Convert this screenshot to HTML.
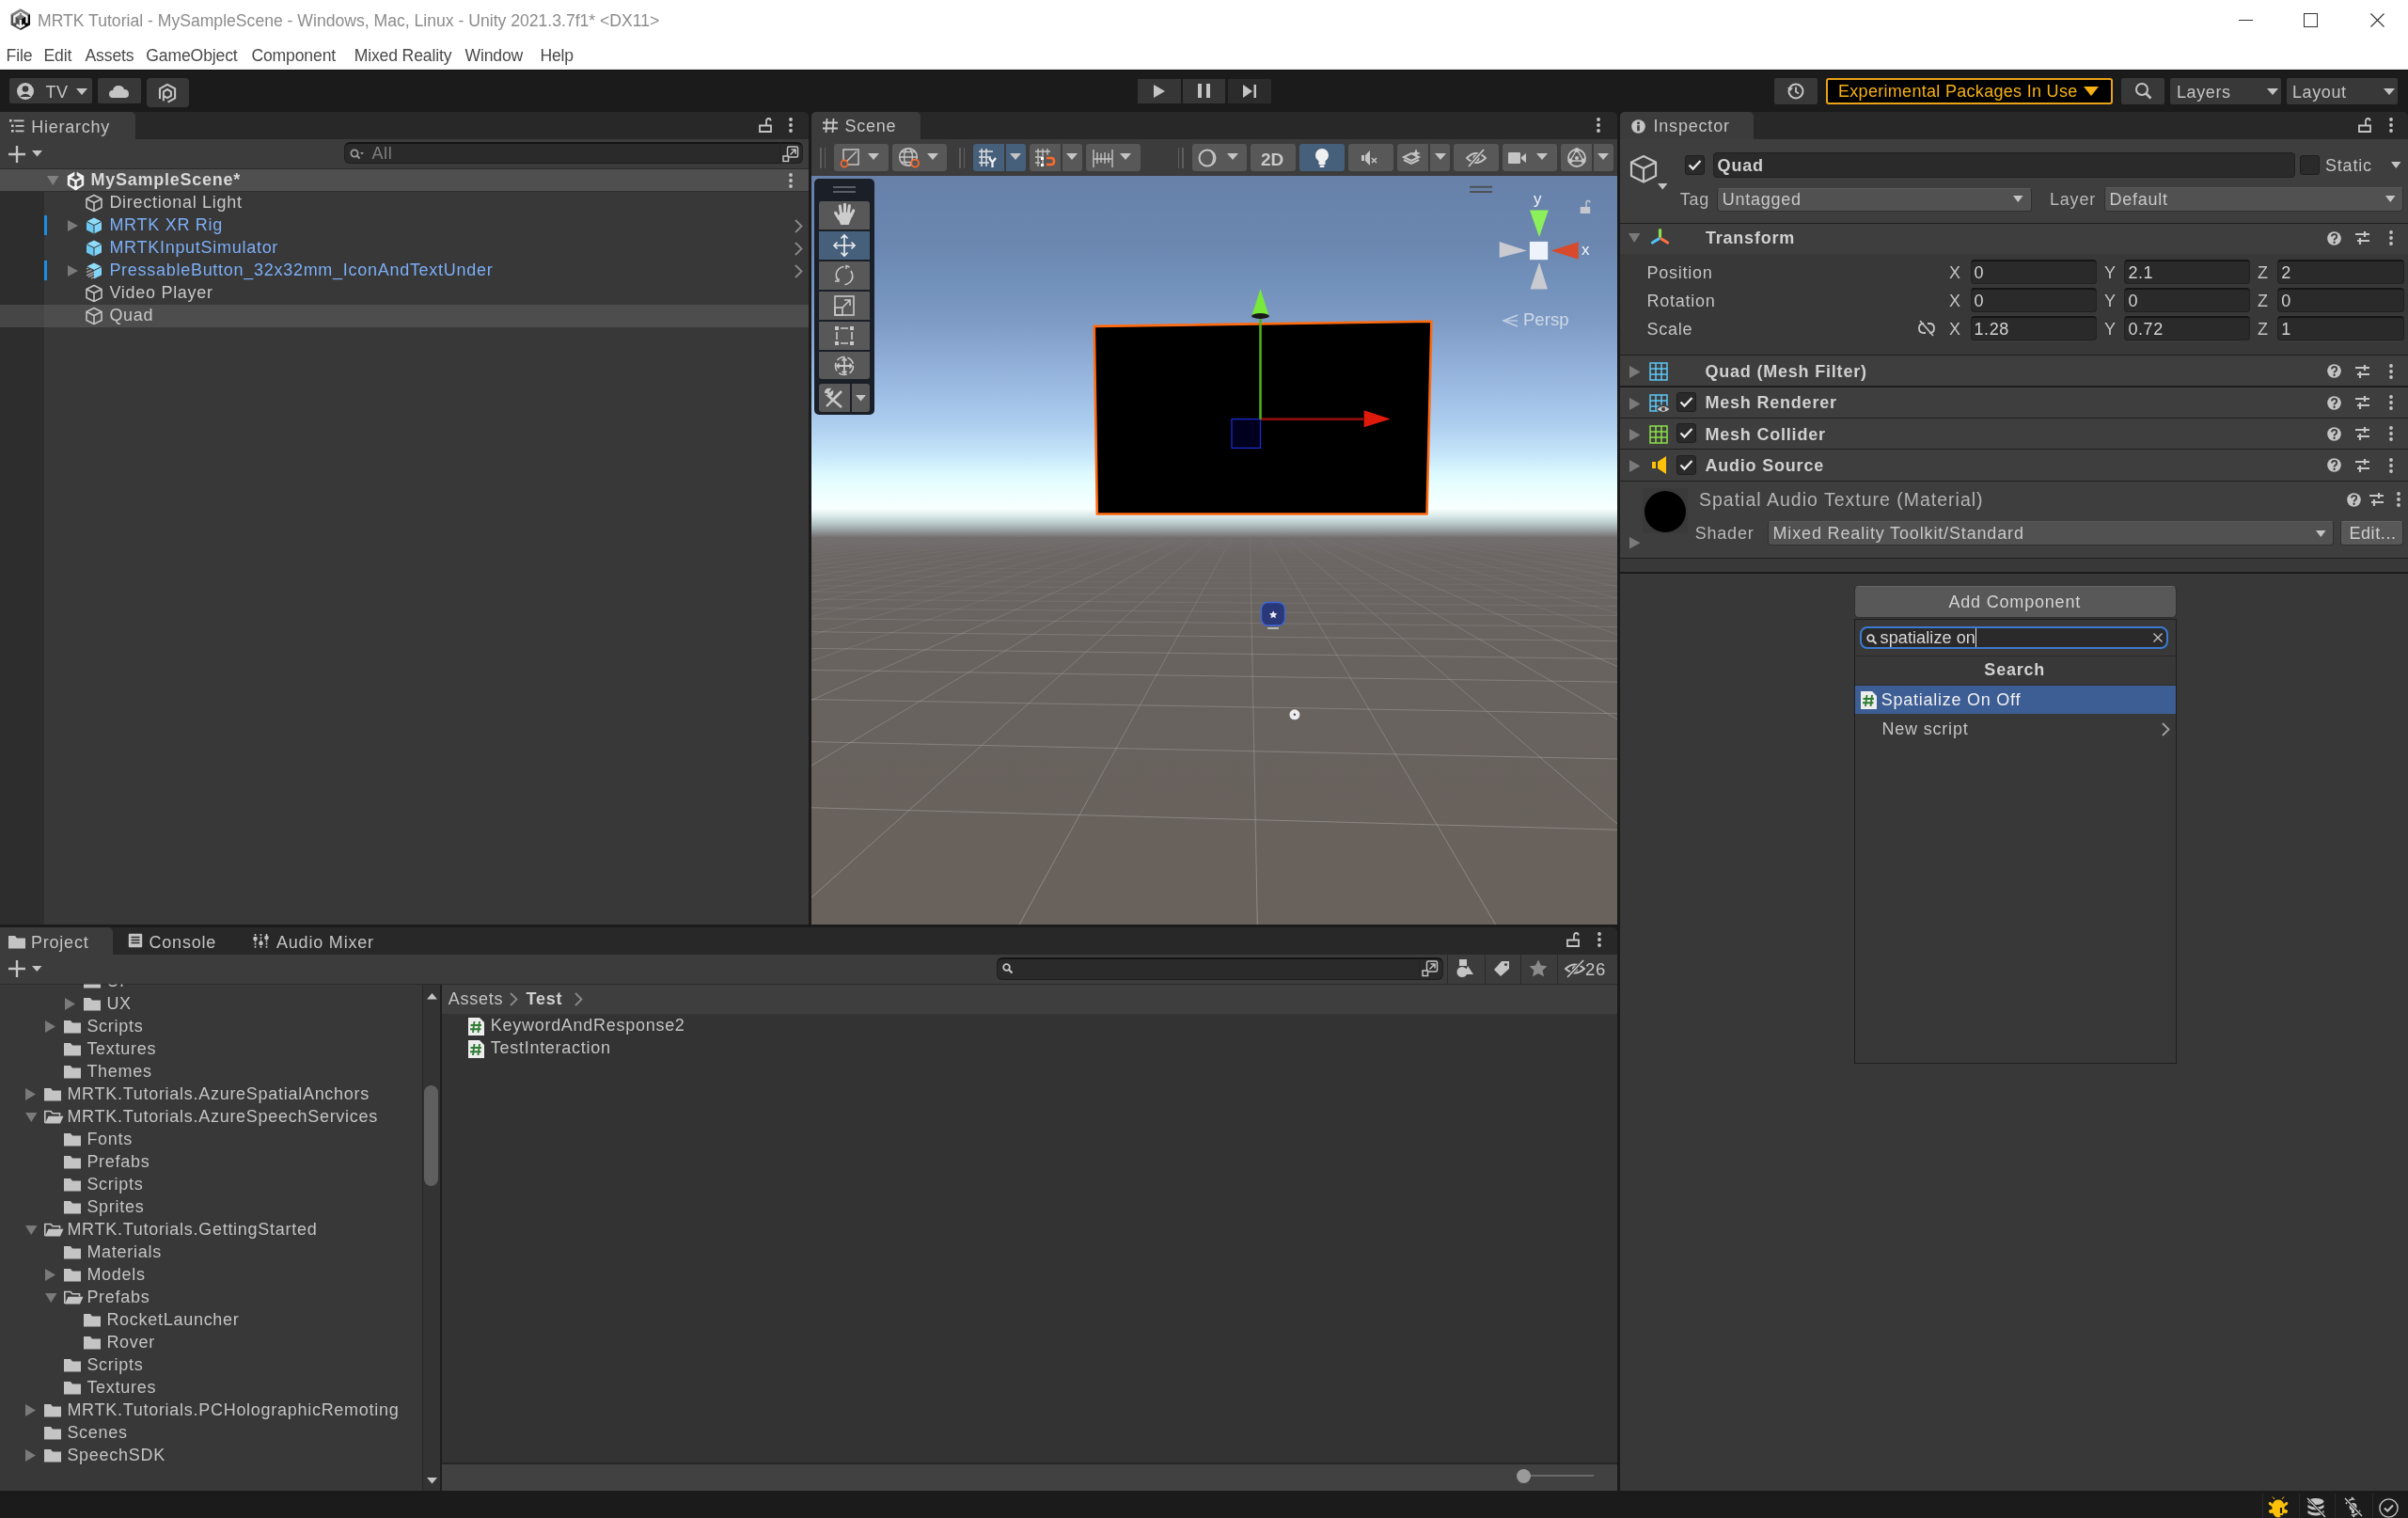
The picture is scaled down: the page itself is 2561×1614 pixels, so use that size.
<!DOCTYPE html><html><head><meta charset="utf-8"><style>
html,body{margin:0;padding:0;}
body{width:2561px;height:1614px;overflow:hidden;position:relative;background:#191919;font-family:"Liberation Sans", sans-serif;}
.a{position:absolute;}
.t{position:absolute;white-space:nowrap;line-height:1;}
svg{overflow:visible}
</style></head><body><div class="a" style="left:0;top:0;width:2561px;height:1614px;overflow:hidden;will-change:transform;background:#1B1B1B;"><div class="a" style="left:0.0px;top:0.0px;width:2561.0px;height:74.0px;background:#FFFFFF;"></div><div class="a" style="left:0.0px;top:72.0px;width:2561.0px;height:1.0px;background:#F0F0F0;"></div><svg class="a" style="left:10.0px;top:8.0px;" width="24" height="26" viewBox="0 0 24 26"><path d="M11.9 1.2 L22 7 L11.9 12.6 L1.6 7 Z" fill="#7E7E7E"/><path d="M1.6 7 L11.9 12.6 L11.9 24.1 L1.6 18.5 Z" fill="#505050"/><path d="M22 7 L22 18.5 L11.9 24.1 L11.9 12.6 Z" fill="#050505"/><path d="M5.3 16.5 L5.3 9.6 L11.9 5.6 L18.5 9.6 L18.5 16.5" fill="none" stroke="#F0F0F0" stroke-width="2.4"/><path d="M7.5 18.3 L11.9 20.8 L16.3 18.3 M11.9 13 L11.9 20.8" fill="none" stroke="#F0F0F0" stroke-width="2.4"/><path d="M11.9 6 L11.9 10.5" stroke="#7E7E7E" stroke-width="2"/><ellipse cx="11.9" cy="11.2" rx="2.6" ry="1.2" fill="#7E7E7E"/></svg><div class="t" style="left:40.0px;top:14.1px;font-size:17.6px;color:#8C8C8C;letter-spacing:0px;">MRTK Tutorial - MySampleScene - Windows, Mac, Linux - Unity 2021.3.7f1* &lt;DX11&gt;</div><div class="t" style="left:6.6px;top:51.1px;font-size:17.6px;color:#4A4A4A;letter-spacing:-0.15px;">File</div><div class="t" style="left:46.5px;top:51.1px;font-size:17.6px;color:#4A4A4A;letter-spacing:-0.15px;">Edit</div><div class="t" style="left:90.5px;top:51.1px;font-size:17.6px;color:#4A4A4A;letter-spacing:-0.15px;">Assets</div><div class="t" style="left:155.3px;top:51.1px;font-size:17.6px;color:#4A4A4A;letter-spacing:-0.15px;">GameObject</div><div class="t" style="left:267.4px;top:51.1px;font-size:17.6px;color:#4A4A4A;letter-spacing:-0.15px;">Component</div><div class="t" style="left:376.7px;top:51.1px;font-size:17.6px;color:#4A4A4A;letter-spacing:-0.15px;">Mixed Reality</div><div class="t" style="left:494.5px;top:51.1px;font-size:17.6px;color:#4A4A4A;letter-spacing:-0.15px;">Window</div><div class="t" style="left:574.4px;top:51.1px;font-size:17.6px;color:#4A4A4A;letter-spacing:-0.15px;">Help</div><div class="a" style="left:2381.0px;top:21.0px;width:15.0px;height:1.0px;background:#333;"></div><div class="a" style="left:2450px;top:14px;width:13px;height:13px;border:1px solid #333;"></div><svg class="a" style="left:2521.0px;top:14.0px;" width="15" height="15" viewBox="0 0 15 15"><path d="M0.5 0.5 L14.5 14.5 M14.5 0.5 L0.5 14.5" stroke="#333" stroke-width="1.1"/></svg><div class="a" style="left:0.0px;top:74.0px;width:2561.0px;height:45.0px;background:#1B1B1B;"></div><div class="a" style="left:0.0px;top:74.0px;width:2561.0px;height:1.0px;background:#0C0C0C;"></div><div class="a" style="left:10.0px;top:83.4px;width:88.0px;height:27.1px;background:#383838;border-radius:2px;"></div><svg class="a" style="left:17.0px;top:87.0px;" width="20" height="20" viewBox="0 0 20 20"><circle cx="10" cy="10" r="9" fill="#C4C4C4"/><circle cx="10" cy="7.5" r="3.3" fill="#383838"/><path d="M4 16 Q10 9.5 16 16" fill="#383838"/></svg><div class="t" style="left:48.5px;top:88.8px;font-size:18px;color:#C4C4C4;letter-spacing:0.5px;">TV</div><svg class="a" style="left:81.0px;top:94.0px;" width="12" height="7" viewBox="0 0 12 7"><path d="M0 0 L12 0 L6 7 Z" fill="#C4C4C4"/></svg><div class="a" style="left:104.0px;top:83.4px;width:46.0px;height:27.1px;background:#383838;border-radius:2px;"></div><svg class="a" style="left:116.0px;top:89.0px;" width="22" height="16" viewBox="0 0 22 16"><path d="M4 15 Q0 15 0 11 Q0 7 4 7 Q5 2 10 2 Q15 2 16 6 Q21 6 21 11 Q21 15 17 15 Z" fill="#C4C4C4"/></svg><div class="a" style="left:155.8px;top:83.0px;width:44.9px;height:30.8px;background:#383838;border-radius:4px;"></div><svg class="a" style="left:160.0px;top:86.0px;" width="30" height="26" viewBox="0 0 30 26"><path d="M10 18.9 L10 8.3 L17.9 3.9 L26.1 8.3 L26.1 18.4 L18.5 22.6" fill="none" stroke="#C4C4C4" stroke-width="2.1" stroke-linejoin="round"/><path d="M17.9 9 L21.9 11.3 L21.9 15.9 L17.9 18.2 L13.9 15.9 L13.9 11.3 Z M13.9 11.3 L13.9 21.2" fill="none" stroke="#C4C4C4" stroke-width="2.1" stroke-linejoin="round"/></svg><div class="a" style="left:1210.0px;top:84.3px;width:45.8px;height:25.7px;background:#363636;"></div><svg class="a" style="left:1226.0px;top:89.0px;" width="14" height="16" viewBox="0 0 14 16"><path d="M1 1 L13 8 L1 15 Z" fill="#C4C4C4"/></svg><div class="a" style="left:1257.8px;top:84.3px;width:45.7px;height:25.7px;background:#363636;"></div><div class="a" style="left:1274.0px;top:89.0px;width:4.0px;height:15.0px;background:#C4C4C4;"></div><div class="a" style="left:1283.0px;top:89.0px;width:4.0px;height:15.0px;background:#C4C4C4;"></div><div class="a" style="left:1305.5px;top:84.3px;width:46.2px;height:25.7px;background:#2B2B2B;"></div><svg class="a" style="left:1321.0px;top:89.0px;" width="16" height="16" viewBox="0 0 16 16"><path d="M1 1 L11 8 L1 15 Z" fill="#C4C4C4"/><rect x="12.5" y="1" width="2.5" height="14" fill="#C4C4C4"/></svg><div class="a" style="left:1887.0px;top:83.0px;width:46.0px;height:27.6px;background:#383838;border-radius:2px;"></div><svg class="a" style="left:1900.0px;top:87.0px;" width="20" height="20" viewBox="0 0 20 20"><circle cx="10" cy="10" r="7.5" fill="none" stroke="#C4C4C4" stroke-width="2"/><path d="M10 5.5 L10 10.5 L13 12.5" fill="none" stroke="#C4C4C4" stroke-width="1.8"/><path d="M1 6 L4 10 L7 6.5" fill="#C4C4C4"/></svg><div class="a" style="left:1941.6px;top:83.0px;width:305.4px;height:28.0px;background:#000000;border-radius:3px;box-sizing:border-box;border:2px solid #E8A317;"></div><div class="t" style="left:1955.0px;top:88.3px;font-size:18px;color:#F5B014;letter-spacing:0.3px;">Experimental Packages In Use</div><svg class="a" style="left:2216.0px;top:92.0px;" width="16" height="10" viewBox="0 0 16 10"><path d="M0 0 L16 0 L8 10 Z" fill="#F5B014"/></svg><div class="a" style="left:2256.0px;top:83.0px;width:45.6px;height:27.6px;background:#383838;border-radius:2px;"></div><svg class="a" style="left:2270.0px;top:87.0px;" width="20" height="20" viewBox="0 0 20 20"><circle cx="8" cy="8" r="6" fill="none" stroke="#C4C4C4" stroke-width="2"/><path d="M12.5 12.5 L17.5 17.5" stroke="#C4C4C4" stroke-width="2.6"/></svg><div class="a" style="left:2308.0px;top:83.0px;width:117.8px;height:27.6px;background:#383838;border-radius:2px;"></div><div class="t" style="left:2315.0px;top:88.8px;font-size:18px;color:#C4C4C4;letter-spacing:0.6px;">Layers</div><svg class="a" style="left:2411.0px;top:94.0px;" width="12" height="7" viewBox="0 0 12 7"><path d="M0 0 L12 0 L6 7 Z" fill="#C4C4C4"/></svg><div class="a" style="left:2432.0px;top:83.0px;width:117.7px;height:27.6px;background:#383838;border-radius:2px;"></div><div class="t" style="left:2438.0px;top:88.8px;font-size:18px;color:#C4C4C4;letter-spacing:0.6px;">Layout</div><svg class="a" style="left:2535.0px;top:94.0px;" width="12" height="7" viewBox="0 0 12 7"><path d="M0 0 L12 0 L6 7 Z" fill="#C4C4C4"/></svg><div class="a" style="left:0.0px;top:119.0px;width:860.0px;height:29.0px;background:#282828;border-top-right-radius:5px;"></div><div class="a" style="left:0.0px;top:119.0px;width:143.7px;height:29.0px;background:#3C3C3C;border-top-right-radius:5px;"></div><svg class="a" style="left:10.0px;top:127.0px;" width="16" height="14" viewBox="0 0 16 14"><g fill="#C4C4C4"><rect x="0" y="0" width="2.6" height="2.6"/><rect x="4.5" y="0.5" width="11" height="1.8"/><rect x="2" y="5.5" width="2.6" height="2.6"/><rect x="6.5" y="6" width="9" height="1.8"/><rect x="2" y="11" width="2.6" height="2.6"/><rect x="6.5" y="11.5" width="9" height="1.8"/></g></svg><div class="t" style="left:33.2px;top:125.7px;font-size:18px;color:#C4C4C4;letter-spacing:0.75px;">Hierarchy</div><svg class="a" style="left:807.0px;top:125.0px;" width="14" height="16" viewBox="0 0 14 16"><path d="M1 8.5 L13 8.5 L13 15 L1 15 Z" fill="none" stroke="#C4C4C4" stroke-width="1.8"/><path d="M8 8.5 L8 4 Q8 1 10.5 1 Q12.6 1 12.6 3.5" fill="none" stroke="#C4C4C4" stroke-width="1.8"/></svg><svg class="a" style="left:838.5px;top:125.0px;" width="4" height="16" viewBox="0 0 4 16"><circle cx="2" cy="2" r="1.9" fill="#C4C4C4"/><circle cx="2" cy="8" r="1.9" fill="#C4C4C4"/><circle cx="2" cy="14" r="1.9" fill="#C4C4C4"/></svg><div class="a" style="left:0.0px;top:148.0px;width:860.0px;height:31.0px;background:#3C3C3C;"></div><div class="a" style="left:0.0px;top:179.0px;width:860.0px;height:1.0px;background:#2A2A2A;"></div><svg class="a" style="left:9.0px;top:154.5px;" width="18" height="18" viewBox="0 0 18 18"><path d="M9 0 L9 18 M0 9 L18 9" stroke="#C4C4C4" stroke-width="2.4"/></svg><svg class="a" style="left:33.5px;top:160.0px;" width="11" height="6.5" viewBox="0 0 11 6.5"><path d="M0 0 L11 0 L5.5 6.5 Z" fill="#C4C4C4"/></svg><div class="a" style="left:366.0px;top:151.4px;width:488.0px;height:23.1px;background:#2A2A2A;border-radius:6px;box-sizing:border-box;border:1px solid #1F1F1F;border-top:2px solid #141414;"></div><svg class="a" style="left:372.0px;top:158.0px;" width="16" height="12" viewBox="0 0 16 12"><circle cx="5" cy="5" r="3.6" fill="none" stroke="#9A9A9A" stroke-width="1.8"/><path d="M7.5 7.5 L10.5 10.5" stroke="#9A9A9A" stroke-width="2"/><path d="M11 4 L15 4 L13 6.5 Z" fill="#9A9A9A"/></svg><div class="t" style="left:395.5px;top:153.8px;font-size:18px;color:#7F7F7F;letter-spacing:0.6px;">All</div><div class="a" style="left:829.0px;top:152.0px;width:1.0px;height:22.0px;background:#232323;"></div><svg class="a" style="left:832.0px;top:154.5px;" width="18" height="18" viewBox="0 0 18 18"><rect x="5.5" y="1" width="11" height="11" rx="1.5" fill="none" stroke="#C4C4C4" stroke-width="1.5"/><rect x="1" y="11" width="5.5" height="5.5" fill="#2A2A2A" stroke="#C4C4C4" stroke-width="1.5"/><path d="M8.5 9.5 L13.5 4.5 M9.5 4 L14 4 L14 8.5" fill="none" stroke="#C4C4C4" stroke-width="1.5"/></svg><div class="a" style="left:0.0px;top:180.0px;width:860.0px;height:803.0px;background:#383838;"></div><div class="a" style="left:0.0px;top:203.0px;width:47.0px;height:780.0px;background:#2D2D2D;"></div><div class="a" style="left:0.0px;top:180.0px;width:860.0px;height:23.0px;background:#4F4F4F;"></div><svg class="a" style="left:50.0px;top:187.0px;" width="12.5" height="10" viewBox="0 0 12.5 10"><path d="M0 0 L12.5 0 L6.25 10 Z" fill="#808080"/></svg><svg class="a" style="left:70.5px;top:181.0px;" width="19" height="22" viewBox="0 0 19 22"><path d="M9.5 3 L16.5 7 L16.5 15 L9.5 19.5 L2.5 15 L2.5 7 Z" fill="none" stroke="#F2F2F2" stroke-width="3.4"/><path d="M9.5 0.5 L9.5 7.5" stroke="#4F4F4F" stroke-width="2.4"/><path d="M9.5 11 L9.5 21" stroke="#F2F2F2" stroke-width="2.6"/><path d="M4.5 10 L4.5 14.5 L8 16.5 M14.5 10 L14.5 14.5 L11 16.5" fill="#4F4F4F" stroke="#4F4F4F" stroke-width="2.2"/><path d="M3 8 L9.5 11.5 L16 8" fill="none" stroke="#F2F2F2" stroke-width="2.2"/></svg><div class="a" style="left:0.0px;top:203.0px;width:860.0px;height:1.0px;background:#2E2E2E;"></div><div class="t" style="left:96.4px;top:181.6px;font-size:18px;color:#D8D8D8;letter-spacing:0.75px;font-weight:bold;">MySampleScene*</div><svg class="a" style="left:839.0px;top:183.5px;" width="4" height="16" viewBox="0 0 4 16"><circle cx="2" cy="2" r="1.9" fill="#C4C4C4"/><circle cx="2" cy="8" r="1.9" fill="#C4C4C4"/><circle cx="2" cy="14" r="1.9" fill="#C4C4C4"/></svg><svg class="a" style="left:90.0px;top:206.0px;" width="20" height="20" viewBox="0 0 20 20"><g transform="scale(1.0)"><path d="M10 1.5 L18 5.5 L18 14.5 L10 18.5 L2 14.5 L2 5.5 Z M2 5.5 L10 9.5 L18 5.5 M10 9.5 L10 18.5" fill="none" stroke="#C4C4C4" stroke-width="1.6" stroke-linejoin="round"/></g></svg><div class="t" style="left:116.4px;top:205.8px;font-size:18px;color:#C8C8C8;letter-spacing:0.72px;">Directional Light</div><div class="a" style="left:47.0px;top:229.0px;width:3.0px;height:21.0px;background:#1C8EE0;"></div><svg class="a" style="left:72.0px;top:233.5px;" width="11" height="12" viewBox="0 0 11 12"><path d="M0 0 L11 6.0 L0 12 Z" fill="#7A7A7A"/></svg><svg class="a" style="left:90.0px;top:230.0px;" width="20" height="20" viewBox="0 0 20 20"><path d="M10 1.5 L18 5.5 L10 9.5 L2 5.5 Z" fill="#8FDCFB"/><path d="M2 5.5 L10 9.5 L10 18.5 L2 14.5 Z" fill="#6CC8F0"/><path d="M18 5.5 L10 9.5 L10 18.5 L18 14.5 Z" fill="#7FD4F8"/><path d="M10 9.5 L10 18.5" stroke="#383838" stroke-width="1"/><path d="M2 5.5 L10 9.5 L18 5.5" fill="none" stroke="#383838" stroke-width="1"/></svg><div class="t" style="left:116.4px;top:229.8px;font-size:18px;color:#7CAEF6;letter-spacing:0.72px;">MRTK XR Rig</div><svg class="a" style="left:845.0px;top:233.0px;" width="9" height="15" viewBox="0 0 9 15"><path d="M1 1 L7.5 7.5 L1 14" fill="none" stroke="#8A8A8A" stroke-width="1.8"/></svg><svg class="a" style="left:90.0px;top:254.0px;" width="20" height="20" viewBox="0 0 20 20"><path d="M10 1.5 L18 5.5 L10 9.5 L2 5.5 Z" fill="#8FDCFB"/><path d="M2 5.5 L10 9.5 L10 18.5 L2 14.5 Z" fill="#6CC8F0"/><path d="M18 5.5 L10 9.5 L10 18.5 L18 14.5 Z" fill="#7FD4F8"/><path d="M10 9.5 L10 18.5" stroke="#383838" stroke-width="1"/><path d="M2 5.5 L10 9.5 L18 5.5" fill="none" stroke="#383838" stroke-width="1"/></svg><div class="t" style="left:116.4px;top:253.8px;font-size:18px;color:#7CAEF6;letter-spacing:0.72px;">MRTKInputSimulator</div><svg class="a" style="left:845.0px;top:257.0px;" width="9" height="15" viewBox="0 0 9 15"><path d="M1 1 L7.5 7.5 L1 14" fill="none" stroke="#8A8A8A" stroke-width="1.8"/></svg><div class="a" style="left:47.0px;top:277.0px;width:3.0px;height:21.0px;background:#1C8EE0;"></div><svg class="a" style="left:72.0px;top:281.5px;" width="11" height="12" viewBox="0 0 11 12"><path d="M0 0 L11 6.0 L0 12 Z" fill="#7A7A7A"/></svg><svg class="a" style="left:90.0px;top:278.0px;" width="20" height="20" viewBox="0 0 20 20"><path d="M10 1.5 L18 5.5 L10 9.5 L2 5.5 Z" fill="#8FDCFB"/><path d="M2 5.5 L10 9.5 L10 18.5 L2 14.5 Z" fill="#383838"/><path d="M2 8 L5 6.5 M2 11.5 L8 8.5 M2 15 L10 11 M4 16.5 L10 13.5 M7 18 L10 16.5" stroke="#9A9A9A" stroke-width="1.4"/><path d="M18 5.5 L10 9.5 L10 18.5 L18 14.5 Z" fill="#7FD4F8"/><path d="M2 5.5 L10 9.5 L18 5.5" fill="none" stroke="#383838" stroke-width="1"/></svg><div class="t" style="left:116.4px;top:277.8px;font-size:18px;color:#7CAEF6;letter-spacing:0.72px;">PressableButton_32x32mm_IconAndTextUnder</div><svg class="a" style="left:845.0px;top:281.0px;" width="9" height="15" viewBox="0 0 9 15"><path d="M1 1 L7.5 7.5 L1 14" fill="none" stroke="#8A8A8A" stroke-width="1.8"/></svg><svg class="a" style="left:90.0px;top:302.0px;" width="20" height="20" viewBox="0 0 20 20"><g transform="scale(1.0)"><path d="M10 1.5 L18 5.5 L18 14.5 L10 18.5 L2 14.5 L2 5.5 Z M2 5.5 L10 9.5 L18 5.5 M10 9.5 L10 18.5" fill="none" stroke="#C4C4C4" stroke-width="1.6" stroke-linejoin="round"/></g></svg><div class="t" style="left:116.4px;top:301.8px;font-size:18px;color:#C8C8C8;letter-spacing:0.72px;">Video Player</div><div class="a" style="left:0.0px;top:324.0px;width:860.0px;height:24.0px;background:#4D4D4D;"></div><div class="a" style="left:0.0px;top:324.0px;width:47.0px;height:24.0px;background:#464646;"></div><svg class="a" style="left:90.0px;top:326.0px;" width="20" height="20" viewBox="0 0 20 20"><g transform="scale(1.0)"><path d="M10 1.5 L18 5.5 L18 14.5 L10 18.5 L2 14.5 L2 5.5 Z M2 5.5 L10 9.5 L18 5.5 M10 9.5 L10 18.5" fill="none" stroke="#C4C4C4" stroke-width="1.6" stroke-linejoin="round"/></g></svg><div class="t" style="left:116.4px;top:325.8px;font-size:18px;color:#C8C8C8;letter-spacing:0.72px;">Quad</div><div class="a" style="left:860.0px;top:119.0px;width:3.0px;height:864.0px;background:#1B1B1B;"></div><div class="a" style="left:863.0px;top:119.0px;width:857.0px;height:29.0px;background:#282828;border-top-left-radius:5px;border-top-right-radius:5px;"></div><div class="a" style="left:863.0px;top:119.0px;width:115.8px;height:29.0px;background:#3C3C3C;border-top-left-radius:5px;border-top-right-radius:5px;"></div><svg class="a" style="left:874.5px;top:126.0px;" width="16" height="15" viewBox="0 0 16 15"><path d="M4.5 0 L3.5 15 M11.5 0 L10.5 15 M0 4.5 L16 4.5 M0 10.5 L16 10.5" stroke="#C4C4C4" stroke-width="1.8"/></svg><div class="t" style="left:898.4px;top:125.4px;font-size:18px;color:#C4C4C4;letter-spacing:0.8px;">Scene</div><svg class="a" style="left:1698.0px;top:124.5px;" width="4" height="16" viewBox="0 0 4 16"><circle cx="2" cy="2" r="1.9" fill="#C4C4C4"/><circle cx="2" cy="8" r="1.9" fill="#C4C4C4"/><circle cx="2" cy="14" r="1.9" fill="#C4C4C4"/></svg><div class="a" style="left:863.0px;top:148.0px;width:857.0px;height:39.0px;background:#3C3C3C;"></div><div class="a" style="left:872.0px;top:157.0px;width:1.5px;height:22.0px;background:#5E5E5E;"></div><div class="a" style="left:876.5px;top:157.0px;width:1.5px;height:22.0px;background:#5E5E5E;"></div><div class="a" style="left:1020.0px;top:157.0px;width:1.5px;height:22.0px;background:#5E5E5E;"></div><div class="a" style="left:1024.5px;top:157.0px;width:1.5px;height:22.0px;background:#5E5E5E;"></div><div class="a" style="left:1252.8px;top:157.0px;width:1.5px;height:22.0px;background:#5E5E5E;"></div><div class="a" style="left:1257.3px;top:157.0px;width:1.5px;height:22.0px;background:#5E5E5E;"></div><div class="a" style="left:887.0px;top:153.0px;width:58.0px;height:28.7px;background:#585858;border-radius:3px;"></div><div class="a" style="left:949.0px;top:153.0px;width:58.0px;height:28.7px;background:#585858;border-radius:3px;"></div><div class="a" style="left:1035.0px;top:153.0px;width:32.7px;height:28.7px;background:#46607C;border-radius:3px 0 0 3px;"></div><div class="a" style="left:1070.0px;top:153.0px;width:20.8px;height:28.7px;background:#46607C;border-radius:0 3px 3px 0;"></div><div class="a" style="left:1095.0px;top:153.0px;width:32.7px;height:28.7px;background:#585858;border-radius:3px 0 0 3px;"></div><div class="a" style="left:1130.0px;top:153.0px;width:21.0px;height:28.7px;background:#585858;border-radius:0 3px 3px 0;"></div><div class="a" style="left:1155.0px;top:153.0px;width:57.6px;height:28.7px;background:#585858;border-radius:3px;"></div><div class="a" style="left:1268.0px;top:153.0px;width:57.8px;height:28.7px;background:#585858;border-radius:3px;"></div><div class="a" style="left:1330.0px;top:153.0px;width:47.6px;height:28.7px;background:#585858;border-radius:3px;"></div><div class="a" style="left:1382.0px;top:153.0px;width:47.8px;height:28.7px;background:#46607C;border-radius:3px;"></div><div class="a" style="left:1434.0px;top:153.0px;width:47.9px;height:28.7px;background:#585858;border-radius:3px;"></div><div class="a" style="left:1486.0px;top:153.0px;width:32.7px;height:28.7px;background:#585858;border-radius:3px 0 0 3px;"></div><div class="a" style="left:1521.0px;top:153.0px;width:20.7px;height:28.7px;background:#585858;border-radius:0 3px 3px 0;"></div><div class="a" style="left:1546.0px;top:153.0px;width:48.0px;height:28.7px;background:#585858;border-radius:3px;"></div><div class="a" style="left:1598.0px;top:153.0px;width:57.7px;height:28.7px;background:#585858;border-radius:3px;"></div><div class="a" style="left:1660.0px;top:153.0px;width:32.6px;height:28.7px;background:#585858;border-radius:3px 0 0 3px;"></div><div class="a" style="left:1695.0px;top:153.0px;width:21.0px;height:28.7px;background:#585858;border-radius:0 3px 3px 0;"></div><svg class="a" style="left:923.4px;top:163.0px;" width="12" height="7" viewBox="0 0 12 7"><path d="M0 0 L12 0 L6.0 7 Z" fill="#C4C4C4"/></svg><svg class="a" style="left:985.6px;top:163.0px;" width="12" height="7" viewBox="0 0 12 7"><path d="M0 0 L12 0 L6.0 7 Z" fill="#C4C4C4"/></svg><svg class="a" style="left:1074.0px;top:163.0px;" width="12" height="7" viewBox="0 0 12 7"><path d="M0 0 L12 0 L6.0 7 Z" fill="#C4C4C4"/></svg><svg class="a" style="left:1134.0px;top:163.0px;" width="12" height="7" viewBox="0 0 12 7"><path d="M0 0 L12 0 L6.0 7 Z" fill="#C4C4C4"/></svg><svg class="a" style="left:1191.1px;top:163.0px;" width="12" height="7" viewBox="0 0 12 7"><path d="M0 0 L12 0 L6.0 7 Z" fill="#C4C4C4"/></svg><svg class="a" style="left:1304.8px;top:163.0px;" width="12" height="7" viewBox="0 0 12 7"><path d="M0 0 L12 0 L6.0 7 Z" fill="#C4C4C4"/></svg><svg class="a" style="left:1525.5px;top:163.0px;" width="12" height="7" viewBox="0 0 12 7"><path d="M0 0 L12 0 L6.0 7 Z" fill="#C4C4C4"/></svg><svg class="a" style="left:1634.3px;top:163.0px;" width="12" height="7" viewBox="0 0 12 7"><path d="M0 0 L12 0 L6.0 7 Z" fill="#C4C4C4"/></svg><svg class="a" style="left:1699.0px;top:163.0px;" width="12" height="7" viewBox="0 0 12 7"><path d="M0 0 L12 0 L6.0 7 Z" fill="#C4C4C4"/></svg><svg class="a" style="left:893.0px;top:157.0px;" width="22" height="22" viewBox="0 0 22 22"><rect x="4" y="2" width="16" height="16" fill="none" stroke="#C4C4C4" stroke-width="1.5"/><path d="M7 15 L18 4" stroke="#C4C4C4" stroke-width="1.5"/><circle cx="5" cy="17" r="3.6" fill="#585858" stroke="#FF6A2A" stroke-width="1.6"/></svg><svg class="a" style="left:955.0px;top:156.0px;" width="26" height="24" viewBox="0 0 26 24"><g transform="scale(1.1)"><circle cx="10" cy="10" r="8.5" fill="none" stroke="#C4C4C4" stroke-width="1.4"/><ellipse cx="10" cy="10" rx="4" ry="8.5" fill="none" stroke="#C4C4C4" stroke-width="1.3"/><path d="M1.5 10 L18.5 10 M3 5 L17 5 M3 15 L17 15" stroke="#C4C4C4" stroke-width="1.2"/><circle cx="16.5" cy="16" r="3.6" fill="#585858" stroke="#FF6A2A" stroke-width="1.6"/></g></svg><svg class="a" style="left:1040.0px;top:157.0px;" width="22" height="22" viewBox="0 0 22 22"><path d="M4 1 L4 20 M9 1 L9 20 M1 4 L16 4 M1 10 L14 10 M1 16 L12 16" stroke="#E0E0E0" stroke-width="1.5"/><path d="M12 11 L15.5 15.5 L19 11 M15.5 15.5 L15.5 21" stroke="#F0F0F0" stroke-width="2.3" fill="none"/></svg><svg class="a" style="left:1100.0px;top:157.0px;" width="22" height="22" viewBox="0 0 22 22"><path d="M4 1 L4 20 M9 1 L9 20 M14 1 L14 8 M1 4 L17 4 M1 10 L8 10 M1 16 L6 16" stroke="#C4C4C4" stroke-width="1.3"/><rect x="7" y="10" width="3" height="3" fill="#fff"/><rect x="7" y="17" width="3" height="3" fill="#fff"/><path d="M13 11 L18 11 Q21 11 21 14.5 Q21 18 18 18 L13 18" fill="none" stroke="#FF6A2A" stroke-width="2.6"/></svg><svg class="a" style="left:1161.0px;top:157.0px;" width="24" height="22" viewBox="0 0 24 22"><path d="M2 2 L2 21 M22 2 L22 21 M2 12 L22 12 M6 5 L6 17 M10 6 L10 16 M14 5 L14 17 M18 6 L18 16" stroke="#C4C4C4" stroke-width="1.4"/></svg><svg class="a" style="left:1274.0px;top:157.0px;" width="24" height="22" viewBox="0 0 24 22"><circle cx="10" cy="11" r="8.5" fill="none" stroke="#C4C4C4" stroke-width="2"/><path d="M14 4 Q19 9 15 17" fill="none" stroke="#C4C4C4" stroke-width="1.4"/></svg><div class="t" style="left:1341.0px;top:159.9px;font-size:19px;color:#C8C8C8;letter-spacing:0px;font-weight:bold;">2D</div><svg class="a" style="left:1395.0px;top:156.0px;" width="22" height="24" viewBox="0 0 22 24"><circle cx="11" cy="9" r="7" fill="#F0F0F0"/><rect x="7.5" y="14" width="7" height="5" fill="#F0F0F0"/><rect x="8.5" y="19.5" width="5" height="2.5" rx="1" fill="#F0F0F0"/></svg><svg class="a" style="left:1447.0px;top:158.0px;" width="22" height="20" viewBox="0 0 22 20"><path d="M1 7 L4 7 L4 13 L1 13 Z M5 7 L10 2 L10 18 L5 13 Z" fill="#C4C4C4"/><path d="M12 10 L17 15 M17 10 L12 15" stroke="#C4C4C4" stroke-width="1.6"/></svg><svg class="a" style="left:1492.0px;top:157.0px;" width="22" height="22" viewBox="0 0 22 22"><path d="M1 13 L9 17 L17 13 M1 10 L9 14 L17 10 L9 6 Z" fill="none" stroke="#C4C4C4" stroke-width="2"/><path d="M14 1 L15.3 4.7 L19 6 L15.3 7.3 L14 11 L12.7 7.3 L9 6 L12.7 4.7 Z" fill="#C4C4C4"/></svg><svg class="a" style="left:1558.0px;top:157.0px;" width="24" height="22" viewBox="0 0 24 22"><path d="M2 11 Q12 1 22 11 Q12 21 2 11 Z" fill="none" stroke="#C4C4C4" stroke-width="1.8"/><circle cx="12" cy="11" r="3.5" fill="#C4C4C4"/><path d="M4 20 L20 2" stroke="#585858" stroke-width="4"/><path d="M4 20 L20 2" stroke="#C4C4C4" stroke-width="1.8"/></svg><svg class="a" style="left:1604.0px;top:159.0px;" width="22" height="18" viewBox="0 0 22 18"><rect x="0" y="3" width="13" height="12" rx="1" fill="#C4C4C4"/><path d="M14 8 L19 4 L19 14 L14 10 Z" fill="#C4C4C4"/></svg><svg class="a" style="left:1665.0px;top:156.0px;" width="24" height="24" viewBox="0 0 24 24"><circle cx="12" cy="12" r="9" fill="none" stroke="#C4C4C4" stroke-width="1.8"/><path d="M12 3 L5 15 L19 15 Z" fill="none" stroke="#C4C4C4" stroke-width="1.4"/><circle cx="12" cy="3.5" r="2.5" fill="#C4C4C4"/><circle cx="5" cy="15" r="2.5" fill="#C4C4C4"/><circle cx="19" cy="15" r="2.5" fill="#C4C4C4"/><circle cx="12" cy="12" r="2" fill="#C4C4C4"/></svg><div class="a" style="left:863.0px;top:187.0px;width:857.0px;height:796.0px;background:linear-gradient(to bottom,#6781A9 0.00%,#6B87B0 9.17%,#7190BA 14.20%,#7D9AC4 19.22%,#92B0D9 25.50%,#A8C8EC 31.78%,#B2D2F2 34.05%,#C8E8FA 37.56%,#DAF8FE 39.57%,#E6FEFE 41.21%,#F8FFFF 44.47%,#D4E4E4 45.60%,#B2C2C2 46.61%,#8E9293 47.61%,#716D6C 48.37%,#6B6664 50.63%,#69635F 64.45%,#68615C 100.00%);"></div><svg class="a" style="left:863px;top:187px" width="857.0" height="796" viewBox="0 0 857.0 796"><defs><linearGradient id="gfade" gradientUnits="userSpaceOnUse" x1="0" y1="385" x2="0" y2="796"><stop offset="0" stop-color="#A8A6A4" stop-opacity="0.06"/><stop offset="0.08" stop-color="#A8A6A4" stop-opacity="0.2"/><stop offset="0.3" stop-color="#A8A6A4" stop-opacity="0.38"/><stop offset="1" stop-color="#A8A6A4" stop-opacity="0.62"/></linearGradient><clipPath id="gclip"><rect x="0" y="385" width="857.0" height="411"/></clipPath></defs><g clip-path="url(#gclip)" stroke="url(#gfade)" stroke-width="1" fill="none"><line x1="-305.44" y1="385.00" x2="-9654.72" y2="796.00" stroke-opacity="0.6"/><line x1="-286.15" y1="385.00" x2="-9401.50" y2="796.00" stroke-opacity="0.6"/><line x1="-266.85" y1="385.00" x2="-9148.27" y2="796.00" stroke-opacity="0.6"/><line x1="-247.56" y1="385.00" x2="-8895.04" y2="796.00" stroke-opacity="0.6"/><line x1="-228.26" y1="385.00" x2="-8641.82" y2="796.00" stroke-opacity="0.6"/><line x1="-208.97" y1="385.00" x2="-8388.59" y2="796.00" stroke-opacity="0.6"/><line x1="-189.67" y1="385.00" x2="-8135.37" y2="796.00" stroke-opacity="0.6"/><line x1="-170.38" y1="385.00" x2="-7882.14" y2="796.00" stroke-opacity="0.6"/><line x1="-151.08" y1="385.00" x2="-7628.91" y2="796.00" stroke-opacity="0.6"/><line x1="-131.79" y1="385.00" x2="-7375.69" y2="796.00" stroke-opacity="0.6"/><line x1="-112.49" y1="385.00" x2="-7122.46" y2="796.00" stroke-opacity="0.6"/><line x1="-93.20" y1="385.00" x2="-6869.24" y2="796.00" stroke-opacity="0.6"/><line x1="-73.90" y1="385.00" x2="-6616.01" y2="796.00" stroke-opacity="0.6"/><line x1="-54.61" y1="385.00" x2="-6362.78" y2="796.00" stroke-opacity="0.6"/><line x1="-35.31" y1="385.00" x2="-6109.56" y2="796.00" stroke-opacity="0.6"/><line x1="-16.02" y1="385.00" x2="-5856.33" y2="796.00" stroke-opacity="0.6"/><line x1="3.28" y1="385.00" x2="-5603.10" y2="796.00" stroke-opacity="0.6"/><line x1="22.57" y1="385.00" x2="-5349.88" y2="796.00" stroke-opacity="0.6"/><line x1="41.87" y1="385.00" x2="-5096.65" y2="796.00" stroke-opacity="0.6"/><line x1="61.16" y1="385.00" x2="-4843.43" y2="796.00" stroke-opacity="0.6"/><line x1="80.46" y1="385.00" x2="-4590.20" y2="796.00" stroke-opacity="0.6"/><line x1="99.75" y1="385.00" x2="-4336.97" y2="796.00" stroke-opacity="0.6"/><line x1="119.05" y1="385.00" x2="-4083.75" y2="796.00" stroke-opacity="0.6"/><line x1="138.34" y1="385.00" x2="-3830.52" y2="796.00" stroke-opacity="0.6"/><line x1="157.64" y1="385.00" x2="-3577.30" y2="796.00" stroke-opacity="0.6"/><line x1="176.93" y1="385.00" x2="-3324.07" y2="796.00" stroke-opacity="0.6"/><line x1="196.23" y1="385.00" x2="-3070.84" y2="796.00" stroke-opacity="0.6"/><line x1="215.52" y1="385.00" x2="-2817.62" y2="796.00" stroke-opacity="0.6"/><line x1="234.82" y1="385.00" x2="-2564.39" y2="796.00" stroke-opacity="0.6"/><line x1="254.11" y1="385.00" x2="-2311.17" y2="796.00" stroke-opacity="0.6"/><line x1="273.41" y1="385.00" x2="-2057.94" y2="796.00" stroke-opacity="0.6"/><line x1="292.70" y1="385.00" x2="-1804.71" y2="796.00" stroke-opacity="0.6"/><line x1="312.00" y1="385.00" x2="-1551.49" y2="796.00" stroke-opacity="0.6"/><line x1="331.29" y1="385.00" x2="-1298.26" y2="796.00" stroke-opacity="0.6"/><line x1="350.59" y1="385.00" x2="-1045.04" y2="796.00" stroke-opacity="0.6"/><line x1="369.88" y1="385.00" x2="-791.81" y2="796.00" stroke-opacity="0.6"/><line x1="389.18" y1="385.00" x2="-538.58" y2="796.00" stroke-opacity="1.0"/><line x1="408.47" y1="385.00" x2="-285.36" y2="796.00" stroke-opacity="1.0"/><line x1="427.77" y1="385.00" x2="-32.13" y2="796.00" stroke-opacity="1.0"/><line x1="447.06" y1="385.00" x2="221.10" y2="796.00" stroke-opacity="1.0"/><line x1="466.36" y1="385.00" x2="474.32" y2="796.00" stroke-opacity="1.0"/><line x1="485.65" y1="385.00" x2="727.55" y2="796.00" stroke-opacity="1.0"/><line x1="504.95" y1="385.00" x2="980.77" y2="796.00" stroke-opacity="1.0"/><line x1="524.24" y1="385.00" x2="1234.00" y2="796.00" stroke-opacity="1.0"/><line x1="543.54" y1="385.00" x2="1487.23" y2="796.00" stroke-opacity="1.0"/><line x1="562.83" y1="385.00" x2="1740.45" y2="796.00" stroke-opacity="0.6"/><line x1="582.13" y1="385.00" x2="1993.68" y2="796.00" stroke-opacity="0.6"/><line x1="601.42" y1="385.00" x2="2246.90" y2="796.00" stroke-opacity="0.6"/><line x1="620.72" y1="385.00" x2="2500.13" y2="796.00" stroke-opacity="0.6"/><line x1="640.01" y1="385.00" x2="2753.36" y2="796.00" stroke-opacity="0.6"/><line x1="659.31" y1="385.00" x2="3006.58" y2="796.00" stroke-opacity="0.6"/><line x1="678.60" y1="385.00" x2="3259.81" y2="796.00" stroke-opacity="0.6"/><line x1="697.90" y1="385.00" x2="3513.03" y2="796.00" stroke-opacity="0.6"/><line x1="717.19" y1="385.00" x2="3766.26" y2="796.00" stroke-opacity="0.6"/><line x1="736.49" y1="385.00" x2="4019.49" y2="796.00" stroke-opacity="0.6"/><line x1="755.78" y1="385.00" x2="4272.71" y2="796.00" stroke-opacity="0.6"/><line x1="775.08" y1="385.00" x2="4525.94" y2="796.00" stroke-opacity="0.6"/><line x1="794.37" y1="385.00" x2="4779.16" y2="796.00" stroke-opacity="0.6"/><line x1="813.67" y1="385.00" x2="5032.39" y2="796.00" stroke-opacity="0.6"/><line x1="832.96" y1="385.00" x2="5285.62" y2="796.00" stroke-opacity="0.6"/><line x1="852.26" y1="385.00" x2="5538.84" y2="796.00" stroke-opacity="0.6"/><line x1="871.55" y1="385.00" x2="5792.07" y2="796.00" stroke-opacity="0.6"/><line x1="890.85" y1="385.00" x2="6045.30" y2="796.00" stroke-opacity="0.6"/><line x1="910.14" y1="385.00" x2="6298.52" y2="796.00" stroke-opacity="0.6"/><line x1="929.44" y1="385.00" x2="6551.75" y2="796.00" stroke-opacity="0.6"/><line x1="948.73" y1="385.00" x2="6804.97" y2="796.00" stroke-opacity="0.6"/><line x1="968.03" y1="385.00" x2="7058.20" y2="796.00" stroke-opacity="0.6"/><line x1="987.32" y1="385.00" x2="7311.43" y2="796.00" stroke-opacity="0.6"/><line x1="1006.62" y1="385.00" x2="7564.65" y2="796.00" stroke-opacity="0.6"/><line x1="1025.91" y1="385.00" x2="7817.88" y2="796.00" stroke-opacity="0.6"/><line x1="1045.21" y1="385.00" x2="8071.10" y2="796.00" stroke-opacity="0.6"/><line x1="1064.50" y1="385.00" x2="8324.33" y2="796.00" stroke-opacity="0.6"/><line x1="1083.80" y1="385.00" x2="8577.56" y2="796.00" stroke-opacity="0.6"/><line x1="1103.09" y1="385.00" x2="8830.78" y2="796.00" stroke-opacity="0.6"/><line x1="1122.39" y1="385.00" x2="9084.01" y2="796.00" stroke-opacity="0.6"/><line x1="1141.68" y1="385.00" x2="9337.23" y2="796.00" stroke-opacity="0.6"/><line x1="1160.98" y1="385.00" x2="9590.46" y2="796.00" stroke-opacity="0.6"/><line x1="1180.27" y1="385.00" x2="9843.69" y2="796.00" stroke-opacity="0.6"/><line x1="1199.57" y1="385.00" x2="10096.91" y2="796.00" stroke-opacity="0.6"/><line x1="1218.86" y1="385.00" x2="10350.14" y2="796.00" stroke-opacity="0.6"/><line x1="1238.16" y1="385.00" x2="10603.37" y2="796.00" stroke-opacity="0.6"/><line x1="0" y1="796.34" x2="857.00" y2="828.96" stroke-opacity="1.00"/><line x1="0" y1="671.73" x2="857.00" y2="695.22" stroke-opacity="1.00"/><line x1="0" y1="601.62" x2="857.00" y2="619.97" stroke-opacity="1.00"/><line x1="0" y1="556.67" x2="857.00" y2="571.72" stroke-opacity="1.00"/><line x1="0" y1="525.39" x2="857.00" y2="538.16" stroke-opacity="1.00"/><line x1="0" y1="502.38" x2="857.00" y2="513.46" stroke-opacity="1.00"/><line x1="0" y1="484.73" x2="857.00" y2="494.52" stroke-opacity="0.96"/><line x1="0" y1="470.77" x2="857.00" y2="479.54" stroke-opacity="0.82"/><line x1="0" y1="459.45" x2="857.00" y2="467.39" stroke-opacity="0.72"/><line x1="0" y1="450.09" x2="857.00" y2="457.34" stroke-opacity="0.63"/><line x1="0" y1="442.22" x2="857.00" y2="448.89" stroke-opacity="0.55"/><line x1="0" y1="435.50" x2="857.00" y2="441.69" stroke-opacity="0.49"/><line x1="0" y1="429.71" x2="857.00" y2="435.47" stroke-opacity="0.44"/><line x1="0" y1="424.66" x2="857.00" y2="430.05" stroke-opacity="0.39"/><line x1="0" y1="420.23" x2="857.00" y2="425.29" stroke-opacity="0.35"/><line x1="0" y1="416.29" x2="857.00" y2="421.07" stroke-opacity="0.31"/><line x1="0" y1="412.78" x2="857.00" y2="417.30" stroke-opacity="0.30"/><line x1="0" y1="409.63" x2="857.00" y2="413.92" stroke-opacity="0.30"/><line x1="0" y1="406.79" x2="857.00" y2="410.87" stroke-opacity="0.30"/><line x1="0" y1="404.20" x2="857.00" y2="408.09" stroke-opacity="0.30"/><line x1="0" y1="401.85" x2="857.00" y2="405.57" stroke-opacity="0.30"/><line x1="0" y1="399.70" x2="857.00" y2="403.26" stroke-opacity="0.30"/><line x1="0" y1="397.72" x2="857.00" y2="401.14" stroke-opacity="0.30"/><line x1="0" y1="395.90" x2="857.00" y2="399.18" stroke-opacity="0.30"/><line x1="0" y1="394.21" x2="857.00" y2="397.37" stroke-opacity="0.30"/><line x1="0" y1="392.65" x2="857.00" y2="395.69" stroke-opacity="0.30"/><line x1="0" y1="391.19" x2="857.00" y2="394.13" stroke-opacity="0.30"/><line x1="0" y1="389.84" x2="857.00" y2="392.68" stroke-opacity="0.30"/><line x1="0" y1="388.57" x2="857.00" y2="391.32" stroke-opacity="0.30"/><line x1="0" y1="387.38" x2="857.00" y2="390.04" stroke-opacity="0.30"/><line x1="0" y1="386.27" x2="857.00" y2="388.85" stroke-opacity="0.30"/></g></svg><svg class="a" style="left:863px;top:187px" width="857.0" height="796" viewBox="0 0 857.0 796"><polygon points="300.8,159.9 659.4,154.8 654.6,359.5 303.8,359.5" fill="#000" stroke="#FF6A10" stroke-width="2.6" stroke-linejoin="round"/><rect x="447.0" y="258.6" width="30.5" height="30.8" fill="#00001E" stroke="#1A2CCC" stroke-width="1.3"/><line x1="477.5" y1="258.6" x2="587.0" y2="258.6" stroke="#8A0E0E" stroke-width="2.6"/><polygon points="587.6,249.2 615.9,258.6 587.6,267.2" fill="#E01A0A"/><line x1="477.5" y1="258.6" x2="477.5" y2="149.0" stroke="#4FAE18" stroke-width="2.6"/><polygon points="468.2,149.0 477.5,119.9 486.6,149.0" fill="#78E83A"/><ellipse cx="477.5" cy="149.0" rx="9.5" ry="3" fill="#1A1A1A"/><rect x="478.5" y="453.5" width="25" height="24.5" rx="7" fill="#2A3878" stroke="#3D66D6" stroke-width="1.4"/><path d="M491.2 462.5 l1.4 2.6 l2.8 0.4 l-2.1 2 l0.6 2.8 l-2.7 -1.4 l-2.7 1.4 l0.6 -2.8 l-2.1 -2 l2.8 -0.4 z" fill="#E8E8F0"/><rect x="485.0" y="480.0" width="12" height="2" fill="#D8D8D8" opacity="0.7"/><circle cx="513.9" cy="572.8" r="5.5" fill="#ECECEC"/><circle cx="513.9" cy="572.8" r="1.3" fill="#555"/></svg><svg class="a" style="left:1560px;top:190px" width="160" height="170" viewBox="0 0 160 170"><path d="M3 8.7 L27 8.7 M3 14 L27 14" stroke="#4E5256" stroke-width="2"/><polygon points="67,33.6 86.8,33.6 77,62" fill="#8CF05A"/><polygon points="118.7,67.2 118.7,85.7 89.6,76.6" fill="#D84A2C"/><polygon points="34.7,67 34.7,84 63.8,76.6" fill="#C9CBD1"/><polygon points="67.5,117.6 86,117.6 77,89" fill="#C9CBD1"/><rect x="66.9" y="66.9" width="19.3" height="19.3" fill="#EEF2FA"/><path d="M120.7 30 L131.2 30 L131.2 37 L120.7 37 Z" fill="#C4C8CE"/><path d="M127 30 L127 26 Q127 23.5 129 23.5 Q131 23.5 131 25.5" fill="none" stroke="#C4C8CE" stroke-width="1.4"/></svg><div class="t" style="left:1631.0px;top:202.6px;font-size:17px;color:#F4F6FA;letter-spacing:0px;">y</div><div class="t" style="left:1682.0px;top:257.1px;font-size:17px;color:#F4F6FA;letter-spacing:0px;">x</div><svg class="a" style="left:1598.0px;top:334.0px;opacity:0.85" width="17" height="14" viewBox="0 0 17 14"><path d="M16 1 L1 7 L16 13" fill="none" stroke="#D4DCE8" stroke-width="1.4"/><path d="M3 7 L16 7" stroke="#D4DCE8" stroke-width="1.2"/></svg><div class="t" style="left:1619.9px;top:331.1px;font-size:18.5px;color:rgba(220,228,238,0.85);letter-spacing:0.1px;">Persp</div><div class="a" style="left:866.4px;top:190.2px;width:63.3px;height:251.3px;background:#1B1F27;border-radius:5px;"></div><div class="a" style="left:886.0px;top:198.0px;width:24.0px;height:1.5px;background:#5A5E66;"></div><div class="a" style="left:886.0px;top:203.3px;width:24.0px;height:1.5px;background:#5A5E66;"></div><div class="a" style="left:871.0px;top:214.3px;width:53.8px;height:29.7px;background:#585858;border-radius:3px 3px 0 0;"></div><div class="a" style="left:871.0px;top:245.7px;width:53.8px;height:30.0px;background:#46607C;border-radius:0;"></div><div class="a" style="left:871.0px;top:278.0px;width:53.8px;height:30.0px;background:#585858;border-radius:0;"></div><div class="a" style="left:871.0px;top:310.0px;width:53.8px;height:29.8px;background:#585858;border-radius:0;"></div><div class="a" style="left:871.0px;top:342.0px;width:53.8px;height:29.7px;background:#585858;border-radius:0;"></div><div class="a" style="left:871.0px;top:373.8px;width:53.8px;height:29.2px;background:#585858;border-radius:0 0 3px 3px;"></div><div class="a" style="left:871.0px;top:408.0px;width:32.9px;height:29.7px;background:#585858;border-radius:3px 0 0 3px;"></div><div class="a" style="left:906.0px;top:408.0px;width:18.8px;height:29.7px;background:#585858;border-radius:0 3px 3px 0;"></div><svg class="a" style="left:909.5px;top:420.0px;" width="11" height="6.5" viewBox="0 0 11 6.5"><path d="M0 0 L11 0 L5.5 6.5 Z" fill="#C4C4C4"/></svg><svg class="a" style="left:870.0px;top:212.0px;" width="56" height="34" viewBox="0 0 56 34"><path d="M20.9 19.3 L24.2 27 L32.6 27 L36.3 17.7 L34.5 14 L23.5 14 Z" fill="#CCCCCC"/><path d="M22.3 20.5 L18.6 14.4 M24.7 16.3 L23.3 7 M28.5 15.1 L28.5 5.3 M32.1 15.8 L33.4 6.7 M35.1 17.7 L37.7 11.9" stroke="#CCCCCC" stroke-width="3.1" stroke-linecap="round"/></svg><svg class="a" style="left:886.0px;top:249.0px;" width="24" height="24" viewBox="0 0 24 24"><path d="M12 1 L12 23 M1 12 L23 12" stroke="#F0F0F0" stroke-width="1.6"/><path d="M8.5 4.5 L12 1 L15.5 4.5 M8.5 19.5 L12 23 L15.5 19.5 M4.5 8.5 L1 12 L4.5 15.5 M19.5 8.5 L23 12 L19.5 15.5" fill="none" stroke="#F0F0F0" stroke-width="1.6"/></svg><svg class="a" style="left:887.0px;top:282.0px;" width="22" height="22" viewBox="0 0 22 22"><path d="M4 16 Q0 9 5 4 Q8 1.5 10.5 1.5" fill="none" stroke="#C8C8C8" stroke-width="1.6"/><path d="M13 4 L13 0.5 L16.5 2" fill="none" stroke="#C8C8C8" stroke-width="1.4"/><path d="M18 6 Q22 13 17 18 Q14 20.5 11.5 20.5" fill="none" stroke="#C8C8C8" stroke-width="1.6"/><path d="M1 17 L5 17 L5 14" fill="none" stroke="#C8C8C8" stroke-width="1.4"/></svg><svg class="a" style="left:887.0px;top:314.0px;" width="22" height="22" viewBox="0 0 22 22"><rect x="1" y="1" width="20" height="20" fill="none" stroke="#C8C8C8" stroke-width="1.6"/><rect x="1" y="13" width="8" height="8" fill="none" stroke="#C8C8C8" stroke-width="1.6"/><path d="M9 13 L17 5 M11 5 L17 5 L17 11" fill="none" stroke="#C8C8C8" stroke-width="1.6"/></svg><svg class="a" style="left:887.0px;top:346.0px;" width="22" height="22" viewBox="0 0 22 22"><rect x="1" y="1" width="4" height="4" fill="#C8C8C8"/><rect x="17" y="1" width="4" height="4" fill="#C8C8C8"/><rect x="1" y="17" width="4" height="4" fill="#C8C8C8"/><rect x="17" y="17" width="4" height="4" fill="#C8C8C8"/><path d="M7 3 L15 3 M7 19 L15 19 M3 7 L3 15 M19 7 L19 15" stroke="#C8C8C8" stroke-width="1.6"/></svg><svg class="a" style="left:886.0px;top:377.0px;" width="24" height="24" viewBox="0 0 24 24"><circle cx="12" cy="12" r="9.5" fill="none" stroke="#C8C8C8" stroke-width="1.6" stroke-dasharray="9 3"/><path d="M12 4 L12 20 M4 12 L20 12" stroke="#C8C8C8" stroke-width="1.8"/><path d="M9.5 6.5 L12 4 L14.5 6.5 M9.5 17.5 L12 20 L14.5 17.5 M6.5 9.5 L4 12 L6.5 14.5 M17.5 9.5 L20 12 L17.5 14.5" fill="none" stroke="#C8C8C8" stroke-width="1.6"/></svg><svg class="a" style="left:876.0px;top:413.0px;" width="22" height="22" viewBox="0 0 22 22"><path d="M3 19 L15 7 M2 5 Q2 1 6 1 L4 4 L6 6 L9 4 Q9 8 5 8 L19 20" fill="none" stroke="#C8C8C8" stroke-width="2.4"/><path d="M19 3 L8 14" stroke="#C8C8C8" stroke-width="2.6"/></svg><div class="a" style="left:1720.0px;top:119.0px;width:3.0px;height:864.0px;background:#1B1B1B;"></div><div class="a" style="left:1723.0px;top:119.0px;width:838.0px;height:29.0px;background:#282828;border-top-left-radius:5px;border-top-right-radius:5px;"></div><div class="a" style="left:1723.0px;top:119.0px;width:141.6px;height:29.0px;background:#3C3C3C;border-top-left-radius:5px;border-top-right-radius:5px;"></div><svg class="a" style="left:1735.0px;top:127.0px;" width="15" height="15" viewBox="0 0 15 15"><circle cx="7.5" cy="7.5" r="7.3" fill="#C4C4C4"/><circle cx="7.5" cy="3.8" r="1.5" fill="#3C3C3C"/><rect x="6.2" y="6.2" width="2.6" height="6" fill="#3C3C3C"/></svg><div class="t" style="left:1758.5px;top:125.1px;font-size:18px;color:#C4C4C4;letter-spacing:0.8px;">Inspector</div><svg class="a" style="left:2508.0px;top:125.0px;" width="14" height="16" viewBox="0 0 14 16"><path d="M1 8.5 L13 8.5 L13 15 L1 15 Z" fill="none" stroke="#C4C4C4" stroke-width="1.8"/><path d="M8 8.5 L8 4 Q8 1 10.5 1 Q12.6 1 12.6 3.5" fill="none" stroke="#C4C4C4" stroke-width="1.8"/></svg><svg class="a" style="left:2540.5px;top:125.0px;" width="4" height="16" viewBox="0 0 4 16"><circle cx="2" cy="2" r="1.9" fill="#C4C4C4"/><circle cx="2" cy="8" r="1.9" fill="#C4C4C4"/><circle cx="2" cy="14" r="1.9" fill="#C4C4C4"/></svg><div class="a" style="left:1723.0px;top:148.0px;width:838.0px;height:89.0px;background:#3E3E3E;"></div><div class="a" style="left:1723.0px;top:237.0px;width:838.0px;height:1.0px;background:#1F1F1F;"></div><svg class="a" style="left:1733.0px;top:164.0px;" width="32" height="32" viewBox="0 0 32 32"><path d="M15 2 L28 8.5 L28 23 L15 29.5 L2 23 L2 8.5 Z M2 8.5 L15 15 L28 8.5 M15 15 L15 29.5" fill="none" stroke="#C4C4C4" stroke-width="2.2" stroke-linejoin="round"/></svg><svg class="a" style="left:1762.8px;top:195.0px;" width="10.5" height="6.5" viewBox="0 0 10.5 6.5"><path d="M0 0 L10.5 0 L5.25 6.5 Z" fill="#C4C4C4"/></svg><div class="a" style="left:1792.0px;top:165.3px;width:20.6px;height:20.7px;background:#2A2A2A;border-radius:3px;box-sizing:border-box;border:1px solid #1E1E1E;"></div><svg class="a" style="left:1795.0px;top:169.3px;" width="15" height="13" viewBox="0 0 15 13"><path d="M1.5 6.5 L5.5 10.5 L13.5 2" fill="none" stroke="#E8E8E8" stroke-width="2.3"/></svg><div class="a" style="left:1822.0px;top:162.0px;width:618.7px;height:26.6px;background:#2A2A2A;border-radius:4px;box-sizing:border-box;border:1px solid #202020;"></div><div class="t" style="left:1826.6px;top:167.4px;font-size:18px;color:#D0D0D0;letter-spacing:0.8px;font-weight:bold;">Quad</div><div class="a" style="left:2446.3px;top:165.0px;width:20.6px;height:20.7px;background:#2A2A2A;border-radius:3px;box-sizing:border-box;border:1px solid #1E1E1E;"></div><div class="t" style="left:2473.0px;top:166.8px;font-size:18px;color:#C4C4C4;letter-spacing:0.8px;">Static</div><svg class="a" style="left:2543.0px;top:171.5px;" width="10.5" height="7" viewBox="0 0 10.5 7"><path d="M0 0 L10.5 0 L5.25 7 Z" fill="#C4C4C4"/></svg><div class="t" style="left:1786.7px;top:202.7px;font-size:18px;color:#B8B8B8;letter-spacing:0.8px;">Tag</div><div class="a" style="left:1826.0px;top:199.5px;width:335.0px;height:25.3px;background:#515151;border-radius:3px;box-sizing:border-box;border:1px solid #303030;border-top-color:#5A5A5A;"></div><div class="t" style="left:1831.7px;top:202.7px;font-size:18px;color:#C8C8C8;letter-spacing:0.75px;">Untagged</div><svg class="a" style="left:2141.0px;top:207.5px;" width="10.5" height="7" viewBox="0 0 10.5 7"><path d="M0 0 L10.5 0 L5.25 7 Z" fill="#C4C4C4"/></svg><div class="t" style="left:2180.0px;top:202.6px;font-size:18px;color:#B8B8B8;letter-spacing:0.8px;">Layer</div><div class="a" style="left:2238.0px;top:198.6px;width:318.0px;height:26.2px;background:#515151;border-radius:3px;box-sizing:border-box;border:1px solid #303030;border-top-color:#5A5A5A;"></div><div class="t" style="left:2243.5px;top:202.6px;font-size:18px;color:#C8C8C8;letter-spacing:0.75px;">Default</div><svg class="a" style="left:2536.9px;top:207.5px;" width="10.5" height="7" viewBox="0 0 10.5 7"><path d="M0 0 L10.5 0 L5.25 7 Z" fill="#C4C4C4"/></svg><div class="a" style="left:1723.0px;top:238.0px;width:838.0px;height:32.0px;background:#3E3E3E;"></div><div class="a" style="left:1723.0px;top:270.0px;width:838.0px;height:107.0px;background:#383838;"></div><svg class="a" style="left:1732.0px;top:248.0px;" width="12.4" height="10" viewBox="0 0 12.4 10"><path d="M0 0 L12.4 0 L6.2 10 Z" fill="#7A7A7A"/></svg><svg class="a" style="left:1755.0px;top:243.0px;" width="21" height="19" viewBox="0 0 21 19"><path d="M10.5 1.5 L10.5 8.5" stroke="#8EE04A" stroke-width="3.2" stroke-linecap="round"/><path d="M9 11 L2.5 15" stroke="#4FC3F7" stroke-width="3.2" stroke-linecap="round"/><path d="M12 11 L18.5 15" stroke="#FF7043" stroke-width="3.2" stroke-linecap="round"/></svg><div class="t" style="left:1813.9px;top:244.4px;font-size:18px;color:#D0D0D0;letter-spacing:0.8px;font-weight:bold;">Transform</div><svg class="a" style="left:2475.2px;top:245.5px;" width="15" height="15" viewBox="0 0 15 15"><circle cx="7.5" cy="7.5" r="7.3" fill="#C4C4C4"/><path d="M5 5.6 Q5 3 7.6 3 Q10.2 3 10.2 5.4 Q10.2 7 8.4 7.8 Q7.6 8.2 7.6 9.4" fill="none" stroke="#3E3E3E" stroke-width="1.9"/><circle cx="7.6" cy="11.8" r="1.2" fill="#3E3E3E"/></svg><svg class="a" style="left:2505.0px;top:245.0px;" width="15" height="16" viewBox="0 0 15 16"><path d="M0 4 L15 4 M0 11 L15 11" stroke="#C4C4C4" stroke-width="1.8"/><path d="M10 1 L10 7 M5 8 L5 15" stroke="#C4C4C4" stroke-width="2.2"/><path d="M0 11 L2 11" stroke="#3E3E3E" stroke-width="1.8"/></svg><svg class="a" style="left:2541.0px;top:245.0px;" width="4" height="16" viewBox="0 0 4 16"><circle cx="2" cy="2" r="1.9" fill="#C4C4C4"/><circle cx="2" cy="8" r="1.9" fill="#C4C4C4"/><circle cx="2" cy="14" r="1.9" fill="#C4C4C4"/></svg><div class="t" style="left:1751.5px;top:281.0px;font-size:18px;color:#C4C4C4;letter-spacing:0.75px;">Position</div><div class="t" style="left:2073.0px;top:281.0px;font-size:18px;color:#C4C4C4;letter-spacing:0px;">X</div><div class="a" style="left:2095.5px;top:276.4px;width:134.0px;height:25.8px;background:#2A2A2A;border-radius:4px;box-sizing:border-box;border:1px solid #212121;border-top:2px solid #151515;"></div><div class="t" style="left:2099.5px;top:281.0px;font-size:18px;color:#D2D2D2;letter-spacing:0.6px;">0</div><div class="t" style="left:2238.0px;top:281.0px;font-size:18px;color:#C4C4C4;letter-spacing:0px;">Y</div><div class="a" style="left:2259.4px;top:276.4px;width:134.1px;height:25.8px;background:#2A2A2A;border-radius:4px;box-sizing:border-box;border:1px solid #212121;border-top:2px solid #151515;"></div><div class="t" style="left:2263.4px;top:281.0px;font-size:18px;color:#D2D2D2;letter-spacing:0.6px;">2.1</div><div class="t" style="left:2401.0px;top:281.0px;font-size:18px;color:#C4C4C4;letter-spacing:0px;">Z</div><div class="a" style="left:2422.3px;top:276.4px;width:134.3px;height:25.8px;background:#2A2A2A;border-radius:4px;box-sizing:border-box;border:1px solid #212121;border-top:2px solid #151515;"></div><div class="t" style="left:2426.3px;top:281.0px;font-size:18px;color:#D2D2D2;letter-spacing:0.6px;">2</div><div class="t" style="left:1751.5px;top:311.0px;font-size:18px;color:#C4C4C4;letter-spacing:0.75px;">Rotation</div><div class="t" style="left:2073.0px;top:311.0px;font-size:18px;color:#C4C4C4;letter-spacing:0px;">X</div><div class="a" style="left:2095.5px;top:306.4px;width:134.0px;height:25.8px;background:#2A2A2A;border-radius:4px;box-sizing:border-box;border:1px solid #212121;border-top:2px solid #151515;"></div><div class="t" style="left:2099.5px;top:311.0px;font-size:18px;color:#D2D2D2;letter-spacing:0.6px;">0</div><div class="t" style="left:2238.0px;top:311.0px;font-size:18px;color:#C4C4C4;letter-spacing:0px;">Y</div><div class="a" style="left:2259.4px;top:306.4px;width:134.1px;height:25.8px;background:#2A2A2A;border-radius:4px;box-sizing:border-box;border:1px solid #212121;border-top:2px solid #151515;"></div><div class="t" style="left:2263.4px;top:311.0px;font-size:18px;color:#D2D2D2;letter-spacing:0.6px;">0</div><div class="t" style="left:2401.0px;top:311.0px;font-size:18px;color:#C4C4C4;letter-spacing:0px;">Z</div><div class="a" style="left:2422.3px;top:306.4px;width:134.3px;height:25.8px;background:#2A2A2A;border-radius:4px;box-sizing:border-box;border:1px solid #212121;border-top:2px solid #151515;"></div><div class="t" style="left:2426.3px;top:311.0px;font-size:18px;color:#D2D2D2;letter-spacing:0.6px;">0</div><div class="t" style="left:1751.5px;top:340.7px;font-size:18px;color:#C4C4C4;letter-spacing:0.75px;">Scale</div><div class="t" style="left:2073.0px;top:340.7px;font-size:18px;color:#C4C4C4;letter-spacing:0px;">X</div><div class="a" style="left:2095.5px;top:336.2px;width:134.0px;height:25.8px;background:#2A2A2A;border-radius:4px;box-sizing:border-box;border:1px solid #212121;border-top:2px solid #151515;"></div><div class="t" style="left:2099.5px;top:340.7px;font-size:18px;color:#D2D2D2;letter-spacing:0.6px;">1.28</div><div class="t" style="left:2238.0px;top:340.7px;font-size:18px;color:#C4C4C4;letter-spacing:0px;">Y</div><div class="a" style="left:2259.4px;top:336.2px;width:134.1px;height:25.8px;background:#2A2A2A;border-radius:4px;box-sizing:border-box;border:1px solid #212121;border-top:2px solid #151515;"></div><div class="t" style="left:2263.4px;top:340.7px;font-size:18px;color:#D2D2D2;letter-spacing:0.6px;">0.72</div><div class="t" style="left:2401.0px;top:340.7px;font-size:18px;color:#C4C4C4;letter-spacing:0px;">Z</div><div class="a" style="left:2422.3px;top:336.2px;width:134.3px;height:25.8px;background:#2A2A2A;border-radius:4px;box-sizing:border-box;border:1px solid #212121;border-top:2px solid #151515;"></div><div class="t" style="left:2426.3px;top:340.7px;font-size:18px;color:#D2D2D2;letter-spacing:0.6px;">1</div><svg class="a" style="left:2039.0px;top:340.0px;" width="20" height="18" viewBox="0 0 20 18"><path d="M7 4 Q2 4 2 9 Q2 14 7 14 L9 14 M11 4 L13 4 Q18 4 18 9 Q18 14 13 14" fill="none" stroke="#C4C4C4" stroke-width="1.8"/><path d="M3 1 L17 17" stroke="#C4C4C4" stroke-width="1.6"/></svg><div class="a" style="left:1723.0px;top:377.0px;width:838.0px;height:1.0px;background:#1F1F1F;"></div><div class="a" style="left:1723.0px;top:378.0px;width:838.0px;height:32.3px;background:#3E3E3E;"></div><div class="a" style="left:1723.0px;top:410.3px;width:838.0px;height:1.0px;background:#1F1F1F;"></div><svg class="a" style="left:1733.0px;top:389.0px;" width="11.5" height="13" viewBox="0 0 11.5 13"><path d="M0 0 L11.5 6.5 L0 13 Z" fill="#7A7A7A"/></svg><svg class="a" style="left:1754.0px;top:385.0px;" width="20" height="20" viewBox="0 0 20 20"><path d="M1 1 H19 V19 H1 Z M7 1 V19 M13 1 V19 M1 7 H19 M1 13 H19" fill="none" stroke="#5CC8F8" stroke-width="1.5"/></svg><div class="t" style="left:1813.4px;top:385.8px;font-size:18px;color:#D0D0D0;letter-spacing:0.8px;font-weight:bold;">Quad (Mesh Filter)</div><svg class="a" style="left:2475.2px;top:387.0px;" width="15" height="15" viewBox="0 0 15 15"><circle cx="7.5" cy="7.5" r="7.3" fill="#C4C4C4"/><path d="M5 5.6 Q5 3 7.6 3 Q10.2 3 10.2 5.4 Q10.2 7 8.4 7.8 Q7.6 8.2 7.6 9.4" fill="none" stroke="#3E3E3E" stroke-width="1.9"/><circle cx="7.6" cy="11.8" r="1.2" fill="#3E3E3E"/></svg><svg class="a" style="left:2505.0px;top:386.5px;" width="15" height="16" viewBox="0 0 15 16"><path d="M0 4 L15 4 M0 11 L15 11" stroke="#C4C4C4" stroke-width="1.8"/><path d="M10 1 L10 7 M5 8 L5 15" stroke="#C4C4C4" stroke-width="2.2"/><path d="M0 11 L2 11" stroke="#3E3E3E" stroke-width="1.8"/></svg><svg class="a" style="left:2541.0px;top:386.5px;" width="4" height="16" viewBox="0 0 4 16"><circle cx="2" cy="2" r="1.9" fill="#C4C4C4"/><circle cx="2" cy="8" r="1.9" fill="#C4C4C4"/><circle cx="2" cy="14" r="1.9" fill="#C4C4C4"/></svg><div class="a" style="left:1723.0px;top:411.6px;width:838.0px;height:32.3px;background:#3E3E3E;"></div><div class="a" style="left:1723.0px;top:443.9px;width:838.0px;height:1.0px;background:#1F1F1F;"></div><svg class="a" style="left:1733.0px;top:422.6px;" width="11.5" height="13" viewBox="0 0 11.5 13"><path d="M0 0 L11.5 6.5 L0 13 Z" fill="#7A7A7A"/></svg><svg class="a" style="left:1754.0px;top:418.6px;" width="22" height="21" viewBox="0 0 22 21"><path d="M1 1 H19 V18 H1 Z M7 1 V18 M13 1 V12 M1 7 H19 M1 13 H12" fill="none" stroke="#5CC8F8" stroke-width="1.5"/><ellipse cx="15" cy="16" rx="7" ry="4.5" fill="#3E3E3E"/><path d="M8.5 16 Q15 10 21.5 16 Q15 22 8.5 16 Z" fill="#C4C4C4"/><circle cx="15" cy="16" r="2" fill="#3E3E3E"/></svg><div class="a" style="left:1783.0px;top:417.2px;width:20.6px;height:20.7px;background:#2A2A2A;border-radius:3px;box-sizing:border-box;border:1px solid #1E1E1E;"></div><svg class="a" style="left:1786.0px;top:421.2px;" width="15" height="13" viewBox="0 0 15 13"><path d="M1.5 6.5 L5.5 10.5 L13.5 2" fill="none" stroke="#E8E8E8" stroke-width="2.3"/></svg><div class="t" style="left:1813.4px;top:419.4px;font-size:18px;color:#D0D0D0;letter-spacing:0.8px;font-weight:bold;">Mesh Renderer</div><svg class="a" style="left:2475.2px;top:420.6px;" width="15" height="15" viewBox="0 0 15 15"><circle cx="7.5" cy="7.5" r="7.3" fill="#C4C4C4"/><path d="M5 5.6 Q5 3 7.6 3 Q10.2 3 10.2 5.4 Q10.2 7 8.4 7.8 Q7.6 8.2 7.6 9.4" fill="none" stroke="#3E3E3E" stroke-width="1.9"/><circle cx="7.6" cy="11.8" r="1.2" fill="#3E3E3E"/></svg><svg class="a" style="left:2505.0px;top:420.1px;" width="15" height="16" viewBox="0 0 15 16"><path d="M0 4 L15 4 M0 11 L15 11" stroke="#C4C4C4" stroke-width="1.8"/><path d="M10 1 L10 7 M5 8 L5 15" stroke="#C4C4C4" stroke-width="2.2"/><path d="M0 11 L2 11" stroke="#3E3E3E" stroke-width="1.8"/></svg><svg class="a" style="left:2541.0px;top:420.1px;" width="4" height="16" viewBox="0 0 4 16"><circle cx="2" cy="2" r="1.9" fill="#C4C4C4"/><circle cx="2" cy="8" r="1.9" fill="#C4C4C4"/><circle cx="2" cy="14" r="1.9" fill="#C4C4C4"/></svg><div class="a" style="left:1723.0px;top:444.8px;width:838.0px;height:32.3px;background:#3E3E3E;"></div><div class="a" style="left:1723.0px;top:477.1px;width:838.0px;height:1.0px;background:#1F1F1F;"></div><svg class="a" style="left:1733.0px;top:455.8px;" width="11.5" height="13" viewBox="0 0 11.5 13"><path d="M0 0 L11.5 6.5 L0 13 Z" fill="#7A7A7A"/></svg><svg class="a" style="left:1754.0px;top:451.8px;" width="20" height="20" viewBox="0 0 20 20"><path d="M1 1 H19 V19 H1 Z M7 1 V19 M13 1 V19 M1 7 H19 M1 13 H19" fill="none" stroke="#8AE04A" stroke-width="1.5"/></svg><div class="a" style="left:1783.0px;top:450.4px;width:20.6px;height:20.7px;background:#2A2A2A;border-radius:3px;box-sizing:border-box;border:1px solid #1E1E1E;"></div><svg class="a" style="left:1786.0px;top:454.4px;" width="15" height="13" viewBox="0 0 15 13"><path d="M1.5 6.5 L5.5 10.5 L13.5 2" fill="none" stroke="#E8E8E8" stroke-width="2.3"/></svg><div class="t" style="left:1813.4px;top:452.6px;font-size:18px;color:#D0D0D0;letter-spacing:0.8px;font-weight:bold;">Mesh Collider</div><svg class="a" style="left:2475.2px;top:453.8px;" width="15" height="15" viewBox="0 0 15 15"><circle cx="7.5" cy="7.5" r="7.3" fill="#C4C4C4"/><path d="M5 5.6 Q5 3 7.6 3 Q10.2 3 10.2 5.4 Q10.2 7 8.4 7.8 Q7.6 8.2 7.6 9.4" fill="none" stroke="#3E3E3E" stroke-width="1.9"/><circle cx="7.6" cy="11.8" r="1.2" fill="#3E3E3E"/></svg><svg class="a" style="left:2505.0px;top:453.3px;" width="15" height="16" viewBox="0 0 15 16"><path d="M0 4 L15 4 M0 11 L15 11" stroke="#C4C4C4" stroke-width="1.8"/><path d="M10 1 L10 7 M5 8 L5 15" stroke="#C4C4C4" stroke-width="2.2"/><path d="M0 11 L2 11" stroke="#3E3E3E" stroke-width="1.8"/></svg><svg class="a" style="left:2541.0px;top:453.3px;" width="4" height="16" viewBox="0 0 4 16"><circle cx="2" cy="2" r="1.9" fill="#C4C4C4"/><circle cx="2" cy="8" r="1.9" fill="#C4C4C4"/><circle cx="2" cy="14" r="1.9" fill="#C4C4C4"/></svg><div class="a" style="left:1723.0px;top:478.3px;width:838.0px;height:32.3px;background:#3E3E3E;"></div><div class="a" style="left:1723.0px;top:510.6px;width:838.0px;height:1.0px;background:#1F1F1F;"></div><svg class="a" style="left:1733.0px;top:489.3px;" width="11.5" height="13" viewBox="0 0 11.5 13"><path d="M0 0 L11.5 6.5 L0 13 Z" fill="#7A7A7A"/></svg><svg class="a" style="left:1757.0px;top:485.3px;" width="16" height="19" viewBox="0 0 16 19"><path d="M0 6 L4 6 L4 13 L0 13 Z M6 6 L15 0 L15 19 L6 13 Z" fill="#FFC107"/></svg><div class="a" style="left:1783.0px;top:483.9px;width:20.6px;height:20.7px;background:#2A2A2A;border-radius:3px;box-sizing:border-box;border:1px solid #1E1E1E;"></div><svg class="a" style="left:1786.0px;top:487.9px;" width="15" height="13" viewBox="0 0 15 13"><path d="M1.5 6.5 L5.5 10.5 L13.5 2" fill="none" stroke="#E8E8E8" stroke-width="2.3"/></svg><div class="t" style="left:1813.4px;top:486.1px;font-size:18px;color:#D0D0D0;letter-spacing:0.8px;font-weight:bold;">Audio Source</div><svg class="a" style="left:2475.2px;top:487.3px;" width="15" height="15" viewBox="0 0 15 15"><circle cx="7.5" cy="7.5" r="7.3" fill="#C4C4C4"/><path d="M5 5.6 Q5 3 7.6 3 Q10.2 3 10.2 5.4 Q10.2 7 8.4 7.8 Q7.6 8.2 7.6 9.4" fill="none" stroke="#3E3E3E" stroke-width="1.9"/><circle cx="7.6" cy="11.8" r="1.2" fill="#3E3E3E"/></svg><svg class="a" style="left:2505.0px;top:486.8px;" width="15" height="16" viewBox="0 0 15 16"><path d="M0 4 L15 4 M0 11 L15 11" stroke="#C4C4C4" stroke-width="1.8"/><path d="M10 1 L10 7 M5 8 L5 15" stroke="#C4C4C4" stroke-width="2.2"/><path d="M0 11 L2 11" stroke="#3E3E3E" stroke-width="1.8"/></svg><svg class="a" style="left:2541.0px;top:486.8px;" width="4" height="16" viewBox="0 0 4 16"><circle cx="2" cy="2" r="1.9" fill="#C4C4C4"/><circle cx="2" cy="8" r="1.9" fill="#C4C4C4"/><circle cx="2" cy="14" r="1.9" fill="#C4C4C4"/></svg><div class="a" style="left:1723.0px;top:511.5px;width:838.0px;height:81.8px;background:#3E3E3E;"></div><div class="a" style="left:1723.0px;top:593.3px;width:838.0px;height:1.0px;background:#1F1F1F;"></div><div class="a" style="left:1746.7px;top:519.4px;width:48.0px;height:48.1px;background:#3A3A3A;"></div><div class="a" style="left:1749px;top:522px;width:44px;height:44px;border-radius:50%;background:#000;"></div><svg class="a" style="left:1733.0px;top:571.0px;" width="11.5" height="12.5" viewBox="0 0 11.5 12.5"><path d="M0 0 L11.5 6.25 L0 12.5 Z" fill="#7A7A7A"/></svg><div class="t" style="left:1807.0px;top:521.5px;font-size:19.5px;color:#B4B4B4;letter-spacing:1.0px;">Spatial Audio Texture (Material)</div><svg class="a" style="left:2495.5px;top:523.5px;" width="15" height="15" viewBox="0 0 15 15"><circle cx="7.5" cy="7.5" r="7.3" fill="#C4C4C4"/><path d="M5 5.6 Q5 3 7.6 3 Q10.2 3 10.2 5.4 Q10.2 7 8.4 7.8 Q7.6 8.2 7.6 9.4" fill="none" stroke="#3E3E3E" stroke-width="1.9"/><circle cx="7.6" cy="11.8" r="1.2" fill="#3E3E3E"/></svg><svg class="a" style="left:2519.5px;top:523.0px;" width="15" height="16" viewBox="0 0 15 16"><path d="M0 4 L15 4 M0 11 L15 11" stroke="#C4C4C4" stroke-width="1.8"/><path d="M10 1 L10 7 M5 8 L5 15" stroke="#C4C4C4" stroke-width="2.2"/><path d="M0 11 L2 11" stroke="#3E3E3E" stroke-width="1.8"/></svg><svg class="a" style="left:2549.0px;top:523.0px;" width="4" height="16" viewBox="0 0 4 16"><circle cx="2" cy="2" r="1.9" fill="#C4C4C4"/><circle cx="2" cy="8" r="1.9" fill="#C4C4C4"/><circle cx="2" cy="14" r="1.9" fill="#C4C4C4"/></svg><div class="t" style="left:1802.7px;top:557.6px;font-size:18px;color:#B8B8B8;letter-spacing:0.8px;">Shader</div><div class="a" style="left:1880.0px;top:554.0px;width:602.4px;height:25.5px;background:#515151;border-radius:3px;box-sizing:border-box;border:1px solid #303030;border-top-color:#5A5A5A;"></div><div class="t" style="left:1885.5px;top:557.6px;font-size:18px;color:#C8C8C8;letter-spacing:0.85px;">Mixed Reality Toolkit/Standard</div><svg class="a" style="left:2462.8px;top:564.0px;" width="10.5" height="7" viewBox="0 0 10.5 7"><path d="M0 0 L10.5 0 L5.25 7 Z" fill="#C4C4C4"/></svg><div class="a" style="left:2489.0px;top:554.0px;width:67.2px;height:25.5px;background:#585858;border-radius:3px;box-sizing:border-box;border:1px solid #303030;border-top-color:#656565;"></div><div class="t" style="left:2498.4px;top:557.6px;font-size:18px;color:#D0D0D0;letter-spacing:0.6px;">Edit...</div><div class="a" style="left:1723.0px;top:594.3px;width:838.0px;height:14.2px;background:#383838;"></div><div class="a" style="left:1723.0px;top:608.0px;width:838.0px;height:2.0px;background:#1A1A1A;"></div><div class="a" style="left:1723.0px;top:610.0px;width:838.0px;height:975.0px;background:#383838;"></div><div class="a" style="left:1971.5px;top:623.0px;width:343.5px;height:33.9px;background:#585858;border-radius:5px;box-sizing:border-box;border:1px solid #303030;border-top-color:#666;"></div><div class="t" style="left:1971.5px;width:342.5px;text-align:center;top:630.6px;font-size:18px;color:#D4D4D4;letter-spacing:0.8px;">Add Component</div><div class="a" style="left:1971.5px;top:658.4px;width:343.8px;height:472.6px;background:#383838;box-sizing:border-box;border:1.5px solid #1E1E1E;"></div><div class="a" style="left:1978.0px;top:666.4px;width:327.7px;height:24.1px;background:#2A2A2A;border-radius:8px;box-sizing:border-box;border:2px solid #3B7AD0;"></div><svg class="a" style="left:1985.0px;top:674.0px;" width="12" height="12" viewBox="0 0 12 12"><circle cx="4.5" cy="4.5" r="3.3" fill="none" stroke="#D0D0D0" stroke-width="1.8"/><path d="M7 7 L10.5 10.5" stroke="#D0D0D0" stroke-width="2.2"/></svg><div class="t" style="left:1999.6px;top:668.5px;font-size:18px;color:#D8D8D8;letter-spacing:0.1px;">spatialize on</div><div class="a" style="left:2101.0px;top:668.0px;width:1.3px;height:20.0px;background:#E0E0E0;"></div><svg class="a" style="left:2290.0px;top:673.0px;" width="10" height="10" viewBox="0 0 10 10"><path d="M0.5 0.5 L9.5 9.5 M9.5 0.5 L0.5 9.5" stroke="#C4C4C4" stroke-width="1.3"/></svg><div class="a" style="left:1973.0px;top:696.5px;width:341.0px;height:1.0px;background:#2C2C2C;"></div><div class="t" style="left:1971.5px;width:342.5px;text-align:center;top:703.4px;font-size:18px;color:#D0D0D0;letter-spacing:0.8px;font-weight:bold;">Search</div><div class="a" style="left:1973.0px;top:728.0px;width:341.0px;height:1.0px;background:#2C2C2C;"></div><div class="a" style="left:1973.0px;top:729.0px;width:341.0px;height:29.7px;background:#3D5E94;"></div><svg class="a" style="left:1977.7px;top:733.7px;" width="19" height="21" viewBox="0 0 19 21"><path d="M1 1 L13 1 L18 6 L18 20 L1 20 Z" fill="#EDEDED"/><path d="M7.5 5 L6 17 M13 5 L11.5 17 M3.5 9 L15 9 M3 13.2 L14.5 13.2" stroke="#2E7D32" stroke-width="1.9"/></svg><div class="t" style="left:2000.7px;top:735.4px;font-size:18px;color:#F0F0F0;letter-spacing:0.75px;">Spatialize On Off</div><div class="t" style="left:2001.5px;top:765.7px;font-size:18px;color:#C4C4C4;letter-spacing:0.8px;">New script</div><svg class="a" style="left:2299.0px;top:768.0px;" width="9" height="15" viewBox="0 0 9 15"><path d="M1 1 L7.5 7.5 L1 14" fill="none" stroke="#A0A0A0" stroke-width="1.8"/></svg><div class="a" style="left:0.0px;top:983.0px;width:1720.0px;height:3.0px;background:#1B1B1B;"></div><div class="a" style="left:0.0px;top:986.0px;width:1720.0px;height:29.0px;background:#282828;border-top-right-radius:5px;"></div><div class="a" style="left:0.0px;top:986.0px;width:119.6px;height:29.0px;background:#3C3C3C;border-top-right-radius:5px;"></div><svg class="a" style="left:9.0px;top:993.5px;" width="19" height="15" viewBox="0 0 19 15"><g transform="scale(1.0)"><path d="M0 1 L7 1 L9 3.5 L18 3.5 L18 14.5 L0 14.5 Z" fill="#C4C4C4"/></g></svg><div class="t" style="left:32.9px;top:992.6px;font-size:18px;color:#C4C4C4;letter-spacing:0.8px;">Project</div><svg class="a" style="left:135.5px;top:992.0px;" width="16" height="16" viewBox="0 0 16 16"><rect x="0.8" y="0.8" width="14.4" height="14.4" rx="1" fill="#C4C4C4"/><path d="M3.5 4.5 L12.5 4.5 M3.5 7.5 L12.5 7.5 M3.5 10.5 L12.5 10.5" stroke="#282828" stroke-width="1.4"/></svg><div class="t" style="left:158.5px;top:992.6px;font-size:18px;color:#C4C4C4;letter-spacing:0.8px;">Console</div><svg class="a" style="left:269.0px;top:993.0px;" width="17" height="16" viewBox="0 0 17 16"><path d="M2.5 0 L2.5 16 M8.5 0 L8.5 16 M14.5 0 L14.5 16" stroke="#C4C4C4" stroke-width="1.6" stroke-dasharray="2 1.2"/><circle cx="2.5" cy="5" r="2.3" fill="#C4C4C4"/><circle cx="8.5" cy="10" r="2.3" fill="#C4C4C4"/><circle cx="14.5" cy="4" r="2.3" fill="#C4C4C4"/></svg><div class="t" style="left:294.0px;top:992.6px;font-size:18px;color:#C4C4C4;letter-spacing:0.8px;">Audio Mixer</div><svg class="a" style="left:1666.0px;top:991.0px;" width="14" height="16" viewBox="0 0 14 16"><path d="M1 8.5 L13 8.5 L13 15 L1 15 Z" fill="none" stroke="#C4C4C4" stroke-width="1.8"/><path d="M8 8.5 L8 4 Q8 1 10.5 1 Q12.6 1 12.6 3.5" fill="none" stroke="#C4C4C4" stroke-width="1.8"/></svg><svg class="a" style="left:1698.5px;top:991.0px;" width="4" height="16" viewBox="0 0 4 16"><circle cx="2" cy="2" r="1.9" fill="#C4C4C4"/><circle cx="2" cy="8" r="1.9" fill="#C4C4C4"/><circle cx="2" cy="14" r="1.9" fill="#C4C4C4"/></svg><div class="a" style="left:0.0px;top:1015.0px;width:1720.0px;height:31.0px;background:#3C3C3C;"></div><div class="a" style="left:0.0px;top:1045.5px;width:1720.0px;height:1.0px;background:#2A2A2A;"></div><svg class="a" style="left:9.0px;top:1021.0px;" width="18" height="18" viewBox="0 0 18 18"><path d="M9 0 L9 18 M0 9 L18 9" stroke="#C4C4C4" stroke-width="2.4"/></svg><svg class="a" style="left:33.9px;top:1027.0px;" width="10.5" height="6" viewBox="0 0 10.5 6"><path d="M0 0 L10.5 0 L5.25 6 Z" fill="#C4C4C4"/></svg><div class="a" style="left:1059.5px;top:1018.0px;width:475.5px;height:23.5px;background:#2A2A2A;border-radius:6px;box-sizing:border-box;border:1px solid #1F1F1F;border-top:2px solid #141414;"></div><svg class="a" style="left:1066.0px;top:1024.0px;" width="12" height="12" viewBox="0 0 12 12"><circle cx="4.5" cy="4.5" r="3.3" fill="none" stroke="#C4C4C4" stroke-width="1.8"/><path d="M7 7 L10.5 10.5" stroke="#C4C4C4" stroke-width="2.2"/></svg><div class="a" style="left:1509.0px;top:1019.0px;width:1.0px;height:22.0px;background:#232323;"></div><svg class="a" style="left:1512.0px;top:1021.0px;" width="18" height="18" viewBox="0 0 18 18"><rect x="5.5" y="1" width="11" height="11" rx="1.5" fill="none" stroke="#C4C4C4" stroke-width="1.5"/><rect x="1" y="11" width="5.5" height="5.5" fill="#2A2A2A" stroke="#C4C4C4" stroke-width="1.5"/><path d="M8.5 9.5 L13.5 4.5 M9.5 4 L14 4 L14 8.5" fill="none" stroke="#C4C4C4" stroke-width="1.5"/></svg><div class="a" style="left:1539.0px;top:1015.0px;width:1.2px;height:31.0px;background:#2A2A2A;"></div><div class="a" style="left:1578.7px;top:1015.0px;width:1.2px;height:31.0px;background:#2A2A2A;"></div><div class="a" style="left:1617.0px;top:1015.0px;width:1.2px;height:31.0px;background:#2A2A2A;"></div><div class="a" style="left:1656.0px;top:1015.0px;width:1.2px;height:31.0px;background:#2A2A2A;"></div><svg class="a" style="left:1549.0px;top:1020.0px;" width="20" height="20" viewBox="0 0 20 20"><rect x="3" y="0" width="8" height="7" fill="#C4C4C4"/><circle cx="6" cy="13.5" r="5.5" fill="#C4C4C4"/><path d="M12 7 L18 16 L8 16 Z" fill="#C4C4C4"/></svg><svg class="a" style="left:1588.0px;top:1021.0px;" width="20" height="18" viewBox="0 0 20 18"><path d="M9 1 L17 1 L17 9 L8 17 L1 10 Z" fill="#C4C4C4"/><circle cx="13.5" cy="4.5" r="1.6" fill="#3C3C3C"/></svg><svg class="a" style="left:1626.0px;top:1020.0px;" width="20" height="19" viewBox="0 0 20 19"><path d="M10 0.5 L12.9 6.6 L19.5 7.3 L14.6 11.8 L16 18.3 L10 15 L4 18.3 L5.4 11.8 L0.5 7.3 L7.1 6.6 Z" fill="#8A8A8A"/></svg><svg class="a" style="left:1664.0px;top:1020.0px;" width="24" height="20" viewBox="0 0 24 20"><path d="M1 10 Q11 1 21 10 Q11 19 1 10 Z" fill="none" stroke="#C4C4C4" stroke-width="1.8"/><circle cx="11" cy="10" r="3" fill="#C4C4C4"/><path d="M3 19 L20 1" stroke="#3C3C3C" stroke-width="3.5"/><path d="M3 19 L20 1" stroke="#C4C4C4" stroke-width="1.6"/></svg><div class="t" style="left:1686.0px;top:1022.3px;font-size:18.5px;color:#C8C8C8;letter-spacing:0.6px;">26</div><div class="a" style="left:0.0px;top:1046.5px;width:449.5px;height:538.5px;background:#383838;"></div><div class="a" style="left:0;top:0;width:2561px;height:1614px;clip-path:inset(1046.5px 2111.5px 29.5px 0px);"><svg class="a" style="left:88.8px;top:1036.1px;" width="19" height="15" viewBox="0 0 19 15"><g transform="scale(1.0)"><path d="M0 1 L7 1 L9 3.5 L18 3.5 L18 14.5 L0 14.5 Z" fill="#C4C4C4"/></g></svg><div class="t" style="left:113.4px;top:1034.4px;font-size:18px;color:#C4C4C4;letter-spacing:0.72px;">UI</div><svg class="a" style="left:68.9px;top:1061.1px;" width="11" height="13" viewBox="0 0 11 13"><path d="M0 0 L11 6.5 L0 13 Z" fill="#7A7A7A"/></svg><svg class="a" style="left:88.8px;top:1060.1px;" width="19" height="15" viewBox="0 0 19 15"><g transform="scale(1.0)"><path d="M0 1 L7 1 L9 3.5 L18 3.5 L18 14.5 L0 14.5 Z" fill="#C4C4C4"/></g></svg><div class="t" style="left:113.4px;top:1058.4px;font-size:18px;color:#C4C4C4;letter-spacing:0.72px;">UX</div><svg class="a" style="left:47.9px;top:1085.1px;" width="11" height="13" viewBox="0 0 11 13"><path d="M0 0 L11 6.5 L0 13 Z" fill="#7A7A7A"/></svg><svg class="a" style="left:67.8px;top:1084.1px;" width="19" height="15" viewBox="0 0 19 15"><g transform="scale(1.0)"><path d="M0 1 L7 1 L9 3.5 L18 3.5 L18 14.5 L0 14.5 Z" fill="#C4C4C4"/></g></svg><div class="t" style="left:92.4px;top:1082.4px;font-size:18px;color:#C4C4C4;letter-spacing:0.72px;">Scripts</div><svg class="a" style="left:67.8px;top:1108.1px;" width="19" height="15" viewBox="0 0 19 15"><g transform="scale(1.0)"><path d="M0 1 L7 1 L9 3.5 L18 3.5 L18 14.5 L0 14.5 Z" fill="#C4C4C4"/></g></svg><div class="t" style="left:92.4px;top:1106.4px;font-size:18px;color:#C4C4C4;letter-spacing:0.72px;">Textures</div><svg class="a" style="left:67.8px;top:1132.1px;" width="19" height="15" viewBox="0 0 19 15"><g transform="scale(1.0)"><path d="M0 1 L7 1 L9 3.5 L18 3.5 L18 14.5 L0 14.5 Z" fill="#C4C4C4"/></g></svg><div class="t" style="left:92.4px;top:1130.4px;font-size:18px;color:#C4C4C4;letter-spacing:0.72px;">Themes</div><svg class="a" style="left:26.9px;top:1157.1px;" width="11" height="13" viewBox="0 0 11 13"><path d="M0 0 L11 6.5 L0 13 Z" fill="#7A7A7A"/></svg><svg class="a" style="left:46.8px;top:1156.1px;" width="19" height="15" viewBox="0 0 19 15"><g transform="scale(1.0)"><path d="M0 1 L7 1 L9 3.5 L18 3.5 L18 14.5 L0 14.5 Z" fill="#C4C4C4"/></g></svg><div class="t" style="left:71.4px;top:1154.4px;font-size:18px;color:#C4C4C4;letter-spacing:0.72px;">MRTK.Tutorials.AzureSpatialAnchors</div><svg class="a" style="left:26.9px;top:1182.6px;" width="12.5" height="10" viewBox="0 0 12.5 10"><path d="M0 0 L12.5 0 L6.25 10 Z" fill="#7A7A7A"/></svg><svg class="a" style="left:46.8px;top:1180.1px;" width="21" height="15" viewBox="0 0 21 15"><path d="M0.8 14 L0.8 1.5 L7 1.5 L9 3.8 L16.5 3.8 L16.5 6.5" fill="none" stroke="#C4C4C4" stroke-width="1.6"/><path d="M0.8 14.5 L4.5 6.8 L20.5 6.8 L17 14.5 Z" fill="#C4C4C4"/></svg><div class="t" style="left:71.4px;top:1178.4px;font-size:18px;color:#C4C4C4;letter-spacing:0.72px;">MRTK.Tutorials.AzureSpeechServices</div><svg class="a" style="left:67.8px;top:1204.1px;" width="19" height="15" viewBox="0 0 19 15"><g transform="scale(1.0)"><path d="M0 1 L7 1 L9 3.5 L18 3.5 L18 14.5 L0 14.5 Z" fill="#C4C4C4"/></g></svg><div class="t" style="left:92.4px;top:1202.4px;font-size:18px;color:#C4C4C4;letter-spacing:0.72px;">Fonts</div><svg class="a" style="left:67.8px;top:1228.1px;" width="19" height="15" viewBox="0 0 19 15"><g transform="scale(1.0)"><path d="M0 1 L7 1 L9 3.5 L18 3.5 L18 14.5 L0 14.5 Z" fill="#C4C4C4"/></g></svg><div class="t" style="left:92.4px;top:1226.4px;font-size:18px;color:#C4C4C4;letter-spacing:0.72px;">Prefabs</div><svg class="a" style="left:67.8px;top:1252.1px;" width="19" height="15" viewBox="0 0 19 15"><g transform="scale(1.0)"><path d="M0 1 L7 1 L9 3.5 L18 3.5 L18 14.5 L0 14.5 Z" fill="#C4C4C4"/></g></svg><div class="t" style="left:92.4px;top:1250.4px;font-size:18px;color:#C4C4C4;letter-spacing:0.72px;">Scripts</div><svg class="a" style="left:67.8px;top:1276.1px;" width="19" height="15" viewBox="0 0 19 15"><g transform="scale(1.0)"><path d="M0 1 L7 1 L9 3.5 L18 3.5 L18 14.5 L0 14.5 Z" fill="#C4C4C4"/></g></svg><div class="t" style="left:92.4px;top:1274.4px;font-size:18px;color:#C4C4C4;letter-spacing:0.72px;">Sprites</div><svg class="a" style="left:26.9px;top:1302.6px;" width="12.5" height="10" viewBox="0 0 12.5 10"><path d="M0 0 L12.5 0 L6.25 10 Z" fill="#7A7A7A"/></svg><svg class="a" style="left:46.8px;top:1300.1px;" width="21" height="15" viewBox="0 0 21 15"><path d="M0.8 14 L0.8 1.5 L7 1.5 L9 3.8 L16.5 3.8 L16.5 6.5" fill="none" stroke="#C4C4C4" stroke-width="1.6"/><path d="M0.8 14.5 L4.5 6.8 L20.5 6.8 L17 14.5 Z" fill="#C4C4C4"/></svg><div class="t" style="left:71.4px;top:1298.4px;font-size:18px;color:#C4C4C4;letter-spacing:0.72px;">MRTK.Tutorials.GettingStarted</div><svg class="a" style="left:67.8px;top:1324.1px;" width="19" height="15" viewBox="0 0 19 15"><g transform="scale(1.0)"><path d="M0 1 L7 1 L9 3.5 L18 3.5 L18 14.5 L0 14.5 Z" fill="#C4C4C4"/></g></svg><div class="t" style="left:92.4px;top:1322.4px;font-size:18px;color:#C4C4C4;letter-spacing:0.72px;">Materials</div><svg class="a" style="left:47.9px;top:1349.1px;" width="11" height="13" viewBox="0 0 11 13"><path d="M0 0 L11 6.5 L0 13 Z" fill="#7A7A7A"/></svg><svg class="a" style="left:67.8px;top:1348.1px;" width="19" height="15" viewBox="0 0 19 15"><g transform="scale(1.0)"><path d="M0 1 L7 1 L9 3.5 L18 3.5 L18 14.5 L0 14.5 Z" fill="#C4C4C4"/></g></svg><div class="t" style="left:92.4px;top:1346.4px;font-size:18px;color:#C4C4C4;letter-spacing:0.72px;">Models</div><svg class="a" style="left:47.9px;top:1374.6px;" width="12.5" height="10" viewBox="0 0 12.5 10"><path d="M0 0 L12.5 0 L6.25 10 Z" fill="#7A7A7A"/></svg><svg class="a" style="left:67.8px;top:1372.1px;" width="21" height="15" viewBox="0 0 21 15"><path d="M0.8 14 L0.8 1.5 L7 1.5 L9 3.8 L16.5 3.8 L16.5 6.5" fill="none" stroke="#C4C4C4" stroke-width="1.6"/><path d="M0.8 14.5 L4.5 6.8 L20.5 6.8 L17 14.5 Z" fill="#C4C4C4"/></svg><div class="t" style="left:92.4px;top:1370.4px;font-size:18px;color:#C4C4C4;letter-spacing:0.72px;">Prefabs</div><svg class="a" style="left:88.8px;top:1396.1px;" width="19" height="15" viewBox="0 0 19 15"><g transform="scale(1.0)"><path d="M0 1 L7 1 L9 3.5 L18 3.5 L18 14.5 L0 14.5 Z" fill="#C4C4C4"/></g></svg><div class="t" style="left:113.4px;top:1394.4px;font-size:18px;color:#C4C4C4;letter-spacing:0.72px;">RocketLauncher</div><svg class="a" style="left:88.8px;top:1420.1px;" width="19" height="15" viewBox="0 0 19 15"><g transform="scale(1.0)"><path d="M0 1 L7 1 L9 3.5 L18 3.5 L18 14.5 L0 14.5 Z" fill="#C4C4C4"/></g></svg><div class="t" style="left:113.4px;top:1418.4px;font-size:18px;color:#C4C4C4;letter-spacing:0.72px;">Rover</div><svg class="a" style="left:67.8px;top:1444.1px;" width="19" height="15" viewBox="0 0 19 15"><g transform="scale(1.0)"><path d="M0 1 L7 1 L9 3.5 L18 3.5 L18 14.5 L0 14.5 Z" fill="#C4C4C4"/></g></svg><div class="t" style="left:92.4px;top:1442.4px;font-size:18px;color:#C4C4C4;letter-spacing:0.72px;">Scripts</div><svg class="a" style="left:67.8px;top:1468.1px;" width="19" height="15" viewBox="0 0 19 15"><g transform="scale(1.0)"><path d="M0 1 L7 1 L9 3.5 L18 3.5 L18 14.5 L0 14.5 Z" fill="#C4C4C4"/></g></svg><div class="t" style="left:92.4px;top:1466.4px;font-size:18px;color:#C4C4C4;letter-spacing:0.72px;">Textures</div><svg class="a" style="left:26.9px;top:1493.1px;" width="11" height="13" viewBox="0 0 11 13"><path d="M0 0 L11 6.5 L0 13 Z" fill="#7A7A7A"/></svg><svg class="a" style="left:46.8px;top:1492.1px;" width="19" height="15" viewBox="0 0 19 15"><g transform="scale(1.0)"><path d="M0 1 L7 1 L9 3.5 L18 3.5 L18 14.5 L0 14.5 Z" fill="#C4C4C4"/></g></svg><div class="t" style="left:71.4px;top:1490.4px;font-size:18px;color:#C4C4C4;letter-spacing:0.72px;">MRTK.Tutorials.PCHolographicRemoting</div><svg class="a" style="left:46.8px;top:1516.1px;" width="19" height="15" viewBox="0 0 19 15"><g transform="scale(1.0)"><path d="M0 1 L7 1 L9 3.5 L18 3.5 L18 14.5 L0 14.5 Z" fill="#C4C4C4"/></g></svg><div class="t" style="left:71.4px;top:1514.4px;font-size:18px;color:#C4C4C4;letter-spacing:0.72px;">Scenes</div><svg class="a" style="left:26.9px;top:1541.1px;" width="11" height="13" viewBox="0 0 11 13"><path d="M0 0 L11 6.5 L0 13 Z" fill="#7A7A7A"/></svg><svg class="a" style="left:46.8px;top:1540.1px;" width="19" height="15" viewBox="0 0 19 15"><g transform="scale(1.0)"><path d="M0 1 L7 1 L9 3.5 L18 3.5 L18 14.5 L0 14.5 Z" fill="#C4C4C4"/></g></svg><div class="t" style="left:71.4px;top:1538.4px;font-size:18px;color:#C4C4C4;letter-spacing:0.72px;">SpeechSDK</div></div><div class="a" style="left:449.5px;top:1046.5px;width:19.2px;height:538.5px;background:#333333;"></div><div class="a" style="left:449.0px;top:1046.5px;width:1.0px;height:538.0px;background:#262626;"></div><svg class="a" style="left:453.5px;top:1056.0px;" width="11" height="6.5" viewBox="0 0 11 6.5"><path d="M0 0 L11 0 L5.5 6.5 Z" fill="#C4C4C4"/></svg><svg class="a" style="left:453.5px;top:1056.0px;" width="11" height="6.5" viewBox="0 0 11 6.5"><rect width="11" height="6.5" fill="#333333"/><path d="M0 6.5 L11 6.5 L5.5 0 Z" fill="#C4C4C4"/></svg><div class="a" style="left:450.8px;top:1154.4px;width:15.2px;height:106.8px;background:#5F5F5F;border-radius:8px;"></div><svg class="a" style="left:453.5px;top:1571.0px;" width="11" height="6.5" viewBox="0 0 11 6.5"><path d="M0 0 L11 0 L5.5 6.5 Z" fill="#C4C4C4"/></svg><div class="a" style="left:468.2px;top:1046.5px;width:1.5px;height:538.5px;background:#1E1E1E;"></div><div class="a" style="left:470.0px;top:1046.5px;width:1250.0px;height:31.3px;background:#3E3E3E;"></div><div class="t" style="left:476.7px;top:1052.7px;font-size:18px;color:#C4C4C4;letter-spacing:0.75px;">Assets</div><svg class="a" style="left:542.0px;top:1055.0px;" width="9" height="15" viewBox="0 0 9 15"><path d="M1 1 L7.5 7.5 L1 14" fill="none" stroke="#8A8A8A" stroke-width="1.8"/></svg><div class="t" style="left:559.4px;top:1052.7px;font-size:18px;color:#D0D0D0;letter-spacing:0.85px;font-weight:bold;">Test</div><svg class="a" style="left:611.0px;top:1055.0px;" width="9" height="15" viewBox="0 0 9 15"><path d="M1 1 L7.5 7.5 L1 14" fill="none" stroke="#8A8A8A" stroke-width="1.8"/></svg><div class="a" style="left:470.0px;top:1077.8px;width:1250.0px;height:477.6px;background:#333333;"></div><svg class="a" style="left:496.7px;top:1080.5px;" width="19" height="21" viewBox="0 0 19 21"><path d="M1 1 L13 1 L18 6 L18 20 L1 20 Z" fill="#EDEDED"/><path d="M7.5 5 L6 17 M13 5 L11.5 17 M3.5 9 L15 9 M3 13.2 L14.5 13.2" stroke="#2E7D32" stroke-width="1.9"/></svg><div class="t" style="left:521.8px;top:1081.3px;font-size:18px;color:#C4C4C4;letter-spacing:0.72px;">KeywordAndResponse2</div><svg class="a" style="left:496.7px;top:1104.5px;" width="19" height="21" viewBox="0 0 19 21"><path d="M1 1 L13 1 L18 6 L18 20 L1 20 Z" fill="#EDEDED"/><path d="M7.5 5 L6 17 M13 5 L11.5 17 M3.5 9 L15 9 M3 13.2 L14.5 13.2" stroke="#2E7D32" stroke-width="1.9"/></svg><div class="t" style="left:521.8px;top:1105.2px;font-size:18px;color:#C4C4C4;letter-spacing:0.72px;">TestInteraction</div><div class="a" style="left:470.0px;top:1555.4px;width:1250.0px;height:29.6px;background:#414141;"></div><div class="a" style="left:470.0px;top:1554.5px;width:1249.7px;height:2.0px;background:#262626;"></div><div class="a" style="left:1620.0px;top:1568.0px;width:75.0px;height:2.2px;background:#6A6A6A;"></div><div class="a" style="left:1612.5px;top:1561.5px;width:15px;height:15px;border-radius:50%;background:#9A9A9A;"></div><div class="a" style="left:0.0px;top:1585.0px;width:2561.0px;height:29.0px;background:#1B1B1B;"></div><div class="a" style="left:2406.0px;top:1588.0px;width:1.0px;height:26.0px;background:#2A2A2A;"></div><div class="a" style="left:2445.0px;top:1588.0px;width:1.0px;height:26.0px;background:#2A2A2A;"></div><div class="a" style="left:2483.4px;top:1588.0px;width:1.0px;height:26.0px;background:#2A2A2A;"></div><div class="a" style="left:2522.9px;top:1588.0px;width:1.0px;height:26.0px;background:#2A2A2A;"></div><svg class="a" style="left:2413.0px;top:1591.0px;" width="21" height="23" viewBox="0 0 21 23"><path d="M10 4 Q15 4 15.5 9 L19 6 L20 8 L16 11 L16 14 L19.5 15 L19 17.5 L15.5 17 Q14 22 10 22 Q6 22 4.5 17 L1 17.5 L0.5 15 L4 14 L4 11 L0 8 L1 6 L4.5 9 Q5 4 10 4 Z M6 3 L4 0.5 M14 3 L16 0.5" fill="#FFC107" stroke="#FFC107" stroke-width="1"/><path d="M13 12 L13 18 M13 20 L13 21.5" stroke="#1B1B1B" stroke-width="2.2"/></svg><svg class="a" style="left:2453.0px;top:1592.0px;" width="22" height="22" viewBox="0 0 22 22"><ellipse cx="10" cy="4.5" rx="8.5" ry="3.5" fill="#C4C4C4"/><path d="M1.5 8 Q10 13 18.5 8 L18.5 11 Q10 16 1.5 11 Z M1.5 14 Q10 19 18.5 14 L18.5 17 Q10 22 1.5 17 Z" fill="#C4C4C4"/><path d="M1 1 L20 21" stroke="#1B1B1B" stroke-width="3"/><path d="M1 1 L20 21" stroke="#C4C4C4" stroke-width="1.4"/></svg><svg class="a" style="left:2491.5px;top:1592.0px;" width="22" height="22" viewBox="0 0 22 22"><path d="M3 7 Q6 2 11 2 L9 0 M18 14 Q15 19 10 19 L12 21" fill="none" stroke="#C4C4C4" stroke-width="1.6"/><circle cx="10.5" cy="10" r="4" fill="#C4C4C4"/><rect x="9" y="14" width="3" height="3" fill="#C4C4C4"/><path d="M2 1 L20 20" stroke="#1B1B1B" stroke-width="3"/><path d="M2 1 L20 20" stroke="#C4C4C4" stroke-width="1.4"/></svg><svg class="a" style="left:2530.4px;top:1592.5px;" width="21" height="21" viewBox="0 0 21 21"><circle cx="10.5" cy="10.5" r="9.6" fill="none" stroke="#C4C4C4" stroke-width="1.4"/><path d="M6 10.5 L9.3 13.5 L15 7.5" fill="none" stroke="#C4C4C4" stroke-width="2"/></svg></div></body></html>
